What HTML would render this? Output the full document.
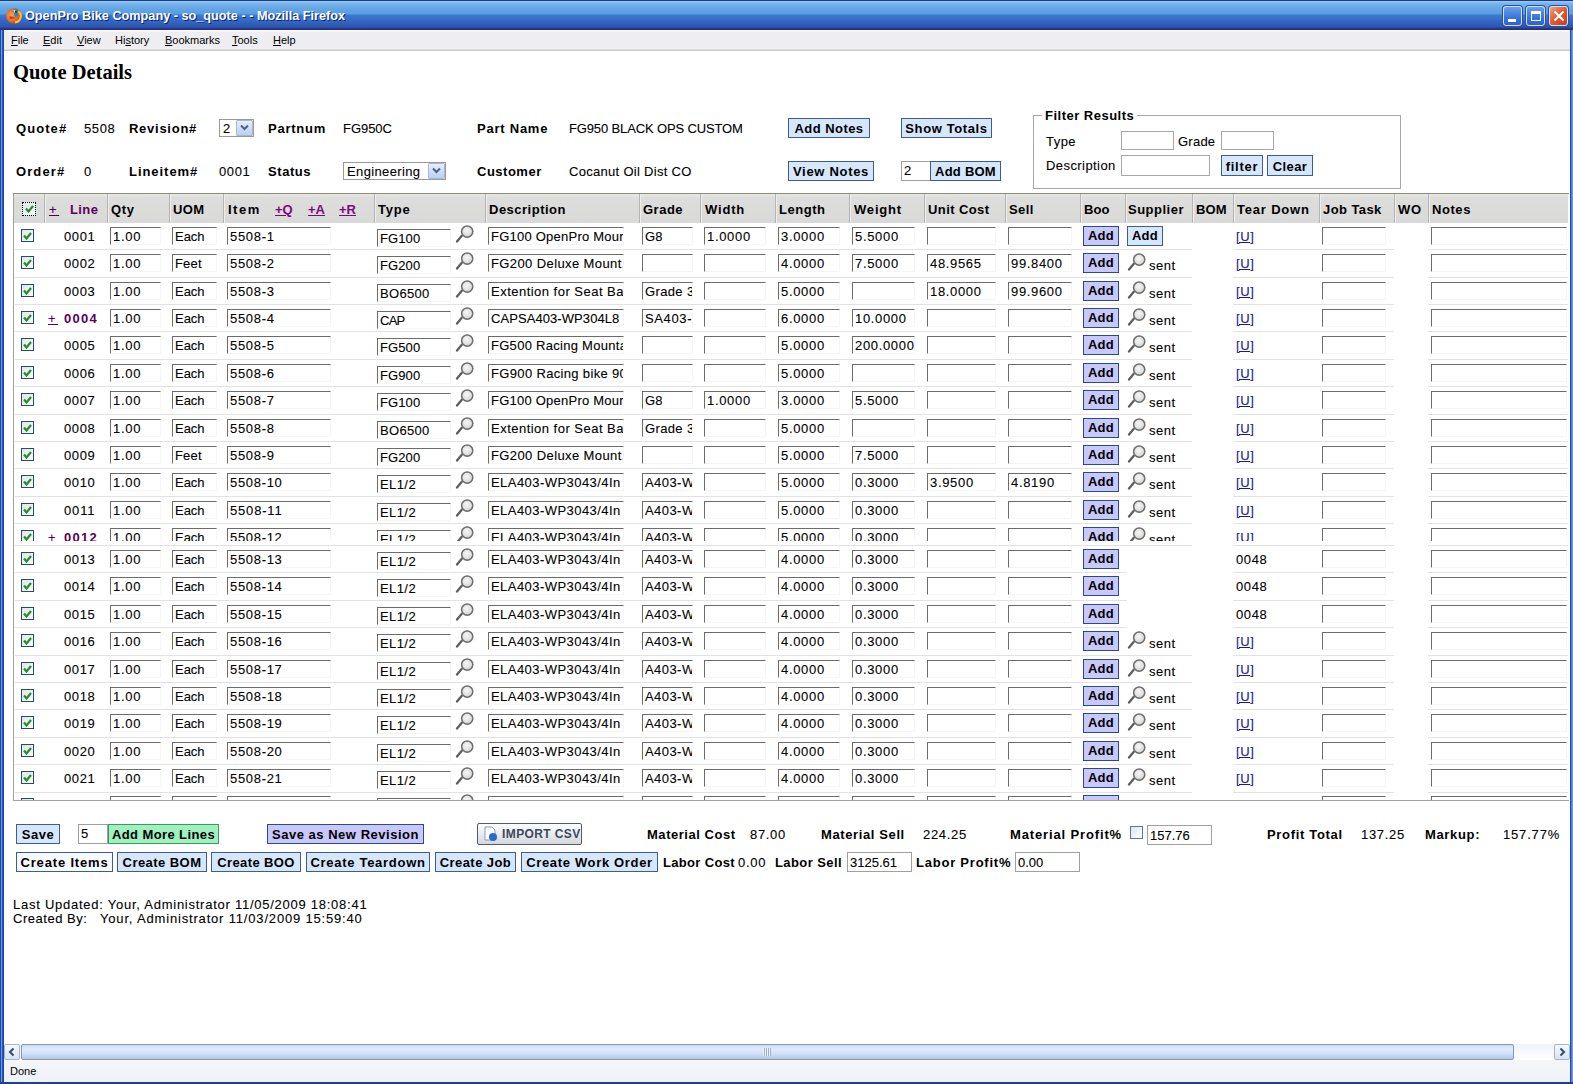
<!DOCTYPE html><html><head><meta charset="utf-8"><title>Quote Details</title><style>
*{box-sizing:border-box;margin:0;padding:0}
html,body{width:1573px;height:1084px;overflow:hidden;background:#fff}
body{position:relative;font-family:"Liberation Sans",sans-serif;font-size:13px;color:#000}
.a{position:absolute;white-space:nowrap}
.t{position:absolute;white-space:nowrap;font-size:13px;line-height:15px}
.b{font-weight:bold}
.inp{position:absolute;background:#fff;border-top:1px solid #6c6c6c;border-left:1px solid #6c6c6c;border-right:1px solid #f6f6f6;border-bottom:1px solid #f6f6f6;overflow:hidden;white-space:nowrap;font-size:13px;line-height:15px;padding-left:2px}
.btn{position:absolute;border:1px solid #3b5c94;background:#d6e6fb;font-weight:bold;font-size:13px;text-align:center;white-space:nowrap;padding-top:1px}
.cb{position:absolute;width:13px;height:13px;border:1px solid #2a4a6a;background:linear-gradient(135deg,#dfe9e5,#f6fbff)}
.sep{position:absolute;height:1px;background:#e2e2e2}
u{text-decoration:underline}
.t,.inp{-webkit-text-stroke:0.1px currentColor}
.b,.btn{-webkit-text-stroke:0}
</style></head><body>
<div class="a" style="left:0;top:0;width:1573px;height:30px;background:linear-gradient(#1e3f7a 0,#1e3f7a 1px,#9acbff 1px,#7db6ec 3px,#64a8e6 8px,#5b9be5 14px,#3a7cc8 15px,#3b6ed0 18px,#2f62bc 23px,#2b5fb0 25px,#2f50c0 27px,#283070 29px,#283070 30px)"></div>
<svg class="a" style="left:6px;top:8px" width="16" height="16" viewBox="0 0 16 16"><defs><radialGradient id="ff" cx="35%" cy="45%" r="65%"><stop offset="0" stop-color="#ffa050"/><stop offset="0.6" stop-color="#e86a20"/><stop offset="1" stop-color="#9a3a18"/></radialGradient></defs><circle cx="8" cy="8" r="7.8" fill="url(#ff)"/><path d="M12.2 3.2A6.2 6.2 0 0 1 9 14.4" stroke="#f4c040" stroke-width="2.2" fill="none"/><path d="M7 1.2L11.8 1.6L12 7.5L9.5 9.5L8 6Z" fill="#2f86a8"/><path d="M7.2 1.6L9.2 2.4L8.8 5.2Z" fill="#f6e8e0"/><circle cx="10" cy="3.8" r="0.9" fill="#101010"/><path d="M3 8.5Q6 7.5 9.5 9.8Q7 11.5 4 11Z" fill="#c84818"/></svg>
<div class="a b" style="left:25px;top:9px;font-size:12.7px;line-height:15px;color:#fff;text-shadow:1px 1px 0 #0a246a;letter-spacing:0px">OpenPro Bike Company - so_quote - - Mozilla Firefox</div>
<div class="a" style="left:1503px;top:6px;width:19px;height:20px;border:1px solid #d0e0ff;border-radius:3px;background:linear-gradient(#6aa0ec,#3a74d8 60%,#2f62c8);box-shadow:0 0 0 1px #2a50a0"></div>
<div class="a" style="left:1526px;top:6px;width:19px;height:20px;border:1px solid #d0e0ff;border-radius:3px;background:linear-gradient(#6aa0ec,#3a74d8 60%,#2f62c8);box-shadow:0 0 0 1px #2a50a0"></div>
<div class="a" style="left:1549px;top:6px;width:19px;height:20px;border:1px solid #d0e0ff;border-radius:3px;background:linear-gradient(135deg,#f0a080,#e05a2a 50%,#c8401a);box-shadow:0 0 0 1px #2a50a0"></div>
<div class="a" style="left:1508px;top:19px;width:8px;height:3px;background:#fff"></div>
<div class="a" style="left:1531px;top:11px;width:10px;height:10px;border:1px solid #fff;border-top:3px solid #fff"></div>
<svg class="a" style="left:1553px;top:10px" width="12" height="12" viewBox="0 0 12 12"><path d="M1.5 1.5L10.5 10.5M10.5 1.5L1.5 10.5" stroke="#fff" stroke-width="2.2"/></svg>
<div class="a" style="left:0;top:30px;width:4px;height:1054px;background:linear-gradient(90deg,#1b48b0 0,#1b48b0 1px,#6a9ae8 1px,#6a9ae8 2px,#2a5ec8 2px,#1e3f8a 4px)"></div>
<div class="a" style="left:1570px;top:30px;width:3px;height:1054px;background:linear-gradient(90deg,#1e3f8a 0,#2a5ec8 1px,#6a9ae8 2px)"></div>
<div class="a" style="left:0;top:1082px;width:1573px;height:2px;background:#1e3f8a"></div>
<div class="a" style="left:4px;top:30px;width:1566px;height:21px;background:linear-gradient(#fbfbfd 0,#fbfbfd 1px,#eeeef2 2px,#eeeef2 19px,#c9c9c9 20px,#c9c9c9 21px)"></div>
<div class="a" style="left:11px;top:34px;font-size:11px;line-height:13px;color:#000"><u>F</u>ile</div>
<div class="a" style="left:43px;top:34px;font-size:11px;line-height:13px;color:#000"><u>E</u>dit</div>
<div class="a" style="left:77px;top:34px;font-size:11px;line-height:13px;color:#000"><u>V</u>iew</div>
<div class="a" style="left:115px;top:34px;font-size:11px;line-height:13px;color:#000">Hi<u>s</u>tory</div>
<div class="a" style="left:165px;top:34px;font-size:11px;line-height:13px;color:#000"><u>B</u>ookmarks</div>
<div class="a" style="left:232px;top:34px;font-size:11px;line-height:13px;color:#000"><u>T</u>ools</div>
<div class="a" style="left:273px;top:34px;font-size:11px;line-height:13px;color:#000"><u>H</u>elp</div>
<div class="a" style="left:4px;top:1044px;width:1566px;height:16px;background:linear-gradient(#eef3fb,#fff)"></div>
<div class="a" style="left:4px;top:1044px;width:16px;height:16px;border:1px solid #a8b4c8;border-radius:2px;background:linear-gradient(#f4f8fe,#d8e4f4)"></div>
<svg class="a" style="left:7px;top:1047px" width="10" height="10" viewBox="0 0 10 10"><path d="M6.5 1.5L3 5L6.5 8.5" stroke="#3a4a5a" stroke-width="2" fill="none"/></svg>
<div class="a" style="left:21px;top:1044px;width:1493px;height:16px;border:1px solid #8898b0;border-radius:2px;background:linear-gradient(#c8dcf8,#e0ecfc 30%,#d0e0f8 60%,#b4c8e8)"></div>
<div class="a" style="left:763px;top:1048px;width:8px;height:8px;background:repeating-linear-gradient(90deg,#eef4fe 0,#eef4fe 1px,#9cb0d0 1px,#9cb0d0 2px)"></div>
<div class="a" style="left:1554px;top:1044px;width:16px;height:16px;border:1px solid #a8b4c8;border-radius:2px;background:linear-gradient(#f4f8fe,#d8e4f4)"></div>
<svg class="a" style="left:1557px;top:1047px" width="10" height="10" viewBox="0 0 10 10"><path d="M3.5 1.5L7 5L3.5 8.5" stroke="#3a4a5a" stroke-width="2" fill="none"/></svg>
<div class="a" style="left:4px;top:1060px;width:1566px;height:22px;background:linear-gradient(#f4f6fa,#eef2f6)"></div>
<div class="a" style="left:10px;top:1065px;font-size:11px;line-height:13px">Done</div>
<div class="a" style="left:13px;top:60px;font-family:'Liberation Serif',serif;font-weight:bold;font-size:20.5px;line-height:24px">Quote Details</div>
<div class="t b" style="left:16px;top:121px;letter-spacing:1.066px;">Quote#</div>
<div class="t" style="left:84px;top:121px;letter-spacing:0.631px;">5508</div>
<div class="t b" style="left:129px;top:121px;letter-spacing:0.734px;">Revision#</div>
<div class="t b" style="left:268px;top:121px;letter-spacing:0.757px;">Partnum</div>
<div class="t" style="left:343px;top:121px;letter-spacing:-0.039px;">FG950C</div>
<div class="t b" style="left:477px;top:121px;letter-spacing:0.765px;">Part Name</div>
<div class="t" style="left:569px;top:121px;letter-spacing:-0.14px;">FG950 BLACK OPS CUSTOM</div>
<div class="t b" style="left:16px;top:164px;letter-spacing:1.101px;">Order#</div>
<div class="t" style="left:84px;top:164px;letter-spacing:0.631px;">0</div>
<div class="t b" style="left:129px;top:164px;letter-spacing:0.952px;">Lineitem#</div>
<div class="t" style="left:219px;top:164px;letter-spacing:0.631px;">0001</div>
<div class="t b" style="left:268px;top:164px;letter-spacing:0.568px;">Status</div>
<div class="t b" style="left:477px;top:164px;letter-spacing:0.502px;">Customer</div>
<div class="t" style="left:569px;top:164px;letter-spacing:0.294px;">Cocanut Oil Dist CO</div>
<div class="a" style="left:219px;top:119px;width:35px;height:18px;border:1px solid #9a9a9a;background:#fff"></div>
<div class="t" style="left:223px;top:121px;letter-spacing:0.631px">2</div>
<div class="a" style="left:236px;top:120px;width:17px;height:16px;border:1px solid #a8b8d8;border-radius:1px;background:linear-gradient(#e4eefc,#bcd0f4)"></div>
<svg class="a" style="left:240px;top:124px" width="9" height="7" viewBox="0 0 9 7"><path d="M1 1.5L4.5 5L8 1.5" stroke="#4d6185" stroke-width="2" fill="none"/></svg>
<div class="a" style="left:343px;top:162px;width:103px;height:18px;border:1px solid #9a9a9a;background:#fff"></div>
<div class="t" style="left:347px;top:164px;letter-spacing:0.371px">Engineering</div>
<div class="a" style="left:428px;top:163px;width:17px;height:16px;border:1px solid #a8b8d8;border-radius:1px;background:linear-gradient(#e4eefc,#bcd0f4)"></div>
<svg class="a" style="left:432px;top:167px" width="9" height="7" viewBox="0 0 9 7"><path d="M1 1.5L4.5 5L8 1.5" stroke="#4d6185" stroke-width="2" fill="none"/></svg>
<div class="btn" style="left:788px;top:118px;width:82px;height:20px;line-height:18px;background:#d6e6fb;border-color:#3b5c94;letter-spacing:0.462px;">Add Notes</div>
<div class="btn" style="left:901px;top:118px;width:91px;height:20px;line-height:18px;background:#d6e6fb;border-color:#3b5c94;letter-spacing:0.609px;">Show Totals</div>
<div class="btn" style="left:788px;top:161px;width:86px;height:20px;line-height:18px;background:#d6e6fb;border-color:#3b5c94;letter-spacing:0.694px;">View Notes</div>
<div class="inp" style="left:901px;top:161px;width:30px;height:20px;line-height:18px;border:1px solid #a0a0a0">2</div>
<div class="btn" style="left:930px;top:161px;width:71px;height:20px;line-height:18px;background:#d6e6fb;border-color:#3b5c94;letter-spacing:0.243px;">Add BOM</div>
<div class="a" style="left:1033px;top:115px;width:368px;height:74px;border:1px solid #a8a8a8"></div>
<div class="t b" style="left:1042px;top:108px;background:#fff;padding:0 3px;letter-spacing:0.49px">Filter Results</div>
<div class="t" style="left:1046px;top:134px;letter-spacing:0.454px;">Type</div>
<div class="t" style="left:1046px;top:158px;letter-spacing:0.426px;">Description</div>
<div class="t" style="left:1178px;top:134px;letter-spacing:0.242px;">Grade</div>
<div class="inp" style="left:1121px;top:131px;width:53px;height:19px;border:1px solid #a8a8a8"></div>
<div class="inp" style="left:1221px;top:131px;width:53px;height:19px;border:1px solid #a8a8a8"></div>
<div class="inp" style="left:1121px;top:155px;width:89px;height:21px;border:1px solid #a8a8a8"></div>
<div class="btn" style="left:1221px;top:155px;width:42px;height:21px;line-height:19px;background:#d6e6fb;border-color:#3b5c94;letter-spacing:0.75px;">filter</div>
<div class="btn" style="left:1267px;top:155px;width:46px;height:21px;line-height:19px;background:#d6e6fb;border-color:#3b5c94;letter-spacing:0.444px;">Clear</div>
<div class="a" style="left:13px;top:193px;width:1556px;height:608px;border-top:1px solid #8c8c7c;border-left:1px solid #a0a0a0;border-bottom:1px solid #a0a0a0"></div>
<div class="a" style="left:14px;top:194px;width:1554px;height:29px;background:linear-gradient(#e8e8e2,#dddddb 15%,#d9d9d9)"></div>
<div class="a" style="left:44px;top:194px;width:1px;height:29px;background:#b4b4b4"></div>
<div class="a" style="left:45px;top:194px;width:1px;height:29px;background:#eeeeee"></div>
<div class="a" style="left:107px;top:194px;width:1px;height:29px;background:#b4b4b4"></div>
<div class="a" style="left:108px;top:194px;width:1px;height:29px;background:#eeeeee"></div>
<div class="a" style="left:169px;top:194px;width:1px;height:29px;background:#b4b4b4"></div>
<div class="a" style="left:170px;top:194px;width:1px;height:29px;background:#eeeeee"></div>
<div class="a" style="left:223px;top:194px;width:1px;height:29px;background:#b4b4b4"></div>
<div class="a" style="left:224px;top:194px;width:1px;height:29px;background:#eeeeee"></div>
<div class="a" style="left:374px;top:194px;width:1px;height:29px;background:#b4b4b4"></div>
<div class="a" style="left:375px;top:194px;width:1px;height:29px;background:#eeeeee"></div>
<div class="a" style="left:485px;top:194px;width:1px;height:29px;background:#b4b4b4"></div>
<div class="a" style="left:486px;top:194px;width:1px;height:29px;background:#eeeeee"></div>
<div class="a" style="left:639px;top:194px;width:1px;height:29px;background:#b4b4b4"></div>
<div class="a" style="left:640px;top:194px;width:1px;height:29px;background:#eeeeee"></div>
<div class="a" style="left:700px;top:194px;width:1px;height:29px;background:#b4b4b4"></div>
<div class="a" style="left:701px;top:194px;width:1px;height:29px;background:#eeeeee"></div>
<div class="a" style="left:775px;top:194px;width:1px;height:29px;background:#b4b4b4"></div>
<div class="a" style="left:776px;top:194px;width:1px;height:29px;background:#eeeeee"></div>
<div class="a" style="left:849px;top:194px;width:1px;height:29px;background:#b4b4b4"></div>
<div class="a" style="left:850px;top:194px;width:1px;height:29px;background:#eeeeee"></div>
<div class="a" style="left:924px;top:194px;width:1px;height:29px;background:#b4b4b4"></div>
<div class="a" style="left:925px;top:194px;width:1px;height:29px;background:#eeeeee"></div>
<div class="a" style="left:1005px;top:194px;width:1px;height:29px;background:#b4b4b4"></div>
<div class="a" style="left:1006px;top:194px;width:1px;height:29px;background:#eeeeee"></div>
<div class="a" style="left:1080px;top:194px;width:1px;height:29px;background:#b4b4b4"></div>
<div class="a" style="left:1081px;top:194px;width:1px;height:29px;background:#eeeeee"></div>
<div class="a" style="left:1125px;top:194px;width:1px;height:29px;background:#b4b4b4"></div>
<div class="a" style="left:1126px;top:194px;width:1px;height:29px;background:#eeeeee"></div>
<div class="a" style="left:1192px;top:194px;width:1px;height:29px;background:#b4b4b4"></div>
<div class="a" style="left:1193px;top:194px;width:1px;height:29px;background:#eeeeee"></div>
<div class="a" style="left:1233px;top:194px;width:1px;height:29px;background:#b4b4b4"></div>
<div class="a" style="left:1234px;top:194px;width:1px;height:29px;background:#eeeeee"></div>
<div class="a" style="left:1319px;top:194px;width:1px;height:29px;background:#b4b4b4"></div>
<div class="a" style="left:1320px;top:194px;width:1px;height:29px;background:#eeeeee"></div>
<div class="a" style="left:1394px;top:194px;width:1px;height:29px;background:#b4b4b4"></div>
<div class="a" style="left:1395px;top:194px;width:1px;height:29px;background:#eeeeee"></div>
<div class="a" style="left:1428px;top:194px;width:1px;height:29px;background:#b4b4b4"></div>
<div class="a" style="left:1429px;top:194px;width:1px;height:29px;background:#eeeeee"></div>
<div class="a" style="left:22px;top:202px;width:14px;height:14px;border:1px dotted #000;background:linear-gradient(135deg,#dfe9e5,#f6fbff)"></div>
<svg class="a" style="left:25px;top:205px" width="9" height="8" viewBox="0 0 9 8"><path d="M1 3.5L3.5 6.5L8 1" stroke="#2b8a2b" stroke-width="2.2" fill="none"/></svg>
<div class="t b" style="left:70px;top:202px;letter-spacing:0.384px;color:#5c005c;">Line</div>
<div class="t b" style="left:111px;top:202px;letter-spacing:0.604px;">Qty</div>
<div class="t b" style="left:173px;top:202px;letter-spacing:0.33px;">UOM</div>
<div class="t b" style="left:228px;top:202px;letter-spacing:1.489px;">Item</div>
<div class="t b" style="left:275px;top:202px;color:#7a0a7a"><u>+Q</u></div>
<div class="t b" style="left:308px;top:202px;color:#7a0a7a"><u>+A</u></div>
<div class="t b" style="left:339px;top:202px;color:#7a0a7a"><u>+R</u></div>
<div class="t b" style="left:378px;top:202px;letter-spacing:0.744px;">Type</div>
<div class="t b" style="left:489px;top:202px;letter-spacing:0.492px;">Description</div>
<div class="t b" style="left:643px;top:202px;letter-spacing:0.499px;">Grade</div>
<div class="t b" style="left:705px;top:202px;letter-spacing:0.813px;">Width</div>
<div class="t b" style="left:779px;top:202px;letter-spacing:0.54px;">Length</div>
<div class="t b" style="left:854px;top:202px;letter-spacing:0.82px;">Weight</div>
<div class="t b" style="left:928px;top:202px;letter-spacing:0.413px;">Unit Cost</div>
<div class="t b" style="left:1009px;top:202px;letter-spacing:0.393px;">Sell</div>
<div class="t b" style="left:1084px;top:202px;letter-spacing:0.121px;">Boo</div>
<div class="t b" style="left:1128px;top:202px;letter-spacing:0.497px;">Supplier</div>
<div class="t b" style="left:1196px;top:202px;letter-spacing:0.13px;">BOM</div>
<div class="t b" style="left:1237px;top:202px;letter-spacing:0.805px;">Tear Down</div>
<div class="t b" style="left:1323px;top:202px;letter-spacing:0.422px;">Job Task</div>
<div class="t b" style="left:1398px;top:202px;letter-spacing:0.677px;">WO</div>
<div class="t b" style="left:1432px;top:202px;letter-spacing:0.569px;">Notes</div>
<div class="t" style="left:49px;top:202px;letter-spacing:2.518px;color:#4a004a;"><u>+</u></div>
<svg width="0" height="0" style="position:absolute"><defs><radialGradient id="mg" cx="45%" cy="40%" r="60%"><stop offset="0" stop-color="#f6f6f6"/><stop offset="0.8" stop-color="#dcdcdc"/><stop offset="1" stop-color="#c0c0c0"/></radialGradient></defs></svg>
<div class="a" style="left:14px;top:223px;width:1555px;height:27px;overflow:hidden">
<div class="sep" style="left:1px;top:26px;width:1177px"></div>
<div class="sep" style="left:1219px;top:26px;width:161px"></div>
<div class="sep" style="left:1414px;top:26px;width:140px"></div>
<div class="cb" style="left:7px;top:6px"></div>
<svg class="a" style="left:9px;top:9px" width="9" height="8" viewBox="0 0 9 8"><path d="M1 3.5L3.5 6.5L8 1" stroke="#2b8a2b" stroke-width="2.2" fill="none"/></svg>
<div class="t" style="left:50px;top:6px;letter-spacing:0.631px;">0001</div>
<div class="inp" style="left:96px;top:4px;width:51px;height:18px;padding-top:1px;letter-spacing:0.695px">1.00</div>
<div class="inp" style="left:158px;top:4px;width:45px;height:18px;padding-top:1px;letter-spacing:-0.035px">Each</div>
<div class="inp" style="left:213px;top:4px;width:104px;height:18px;padding-top:1px;letter-spacing:0.692px">5508-1</div>
<div class="inp" style="left:363px;top:6px;width:74px;height:18px;padding-top:1px;letter-spacing:0.105px">FG100</div>
<svg class="a" style="left:441px;top:2px" width="19" height="19" viewBox="0 0 19 19"><path d="M6.8 10.8L2 16.6" stroke="#5e5e5e" stroke-width="2.3" stroke-linecap="round"/><circle cx="12.2" cy="6.6" r="5.6" fill="url(#mg)" stroke="#6e6e6e" stroke-width="1.5"/></svg>
<div class="inp" style="left:474px;top:4px;width:136px;height:18px;padding-top:1px;letter-spacing:0.235px">FG100 OpenPro Mour</div>
<div class="inp" style="left:628px;top:4px;width:51px;height:18px;padding-top:1px;letter-spacing:0.049px">G8</div>
<div class="inp" style="left:690px;top:4px;width:62px;height:18px;padding-top:1px;letter-spacing:0.674px">1.0000</div>
<div class="inp" style="left:764px;top:4px;width:62px;height:18px;padding-top:1px;letter-spacing:0.674px">3.0000</div>
<div class="inp" style="left:838px;top:4px;width:63px;height:18px;padding-top:1px;letter-spacing:0.674px">5.5000</div>
<div class="inp" style="left:913px;top:4px;width:69px;height:18px;padding-top:1px;letter-spacing:0px"></div>
<div class="inp" style="left:994px;top:4px;width:64px;height:18px;padding-top:1px;letter-spacing:0px"></div>
<div class="btn" style="left:1069px;top:3px;width:36px;height:20px;line-height:18px;background:#c8c8fa;border-color:#2a4a8a;letter-spacing:0.273px;padding-top:0">Add</div>
<div class="btn" style="left:1113px;top:3px;width:36px;height:20px;line-height:18px;background:#d6e6fb;border-color:#3b5c94;letter-spacing:0.273px;padding-top:0">Add</div>
<div class="t" style="left:1222px;top:6px;color:#1a1a8c"><u><span style="letter-spacing:0.6px">[U</span>]</u></div>
<div class="inp" style="left:1308px;top:4px;width:64px;height:18px;padding-top:1px;letter-spacing:0px"></div>
<div class="inp" style="left:1417px;top:4px;width:136px;height:18px;padding-top:1px;letter-spacing:0px"></div>
</div>
<div class="a" style="left:14px;top:250px;width:1555px;height:28px;overflow:hidden">
<div class="sep" style="left:1px;top:27px;width:1177px"></div>
<div class="sep" style="left:1219px;top:27px;width:161px"></div>
<div class="sep" style="left:1414px;top:27px;width:140px"></div>
<div class="cb" style="left:7px;top:6px"></div>
<svg class="a" style="left:9px;top:9px" width="9" height="8" viewBox="0 0 9 8"><path d="M1 3.5L3.5 6.5L8 1" stroke="#2b8a2b" stroke-width="2.2" fill="none"/></svg>
<div class="t" style="left:50px;top:6px;letter-spacing:0.631px;">0002</div>
<div class="inp" style="left:96px;top:4px;width:51px;height:18px;padding-top:1px;letter-spacing:0.695px">1.00</div>
<div class="inp" style="left:158px;top:4px;width:45px;height:18px;padding-top:1px;letter-spacing:0.174px">Feet</div>
<div class="inp" style="left:213px;top:4px;width:104px;height:18px;padding-top:1px;letter-spacing:0.692px">5508-2</div>
<div class="inp" style="left:363px;top:6px;width:74px;height:18px;padding-top:1px;letter-spacing:0.105px">FG200</div>
<svg class="a" style="left:441px;top:2px" width="19" height="19" viewBox="0 0 19 19"><path d="M6.8 10.8L2 16.6" stroke="#5e5e5e" stroke-width="2.3" stroke-linecap="round"/><circle cx="12.2" cy="6.6" r="5.6" fill="url(#mg)" stroke="#6e6e6e" stroke-width="1.5"/></svg>
<div class="inp" style="left:474px;top:4px;width:136px;height:18px;padding-top:1px;letter-spacing:0.395px">FG200 Deluxe Mount.</div>
<div class="inp" style="left:628px;top:4px;width:51px;height:18px;padding-top:1px;letter-spacing:0px"></div>
<div class="inp" style="left:690px;top:4px;width:62px;height:18px;padding-top:1px;letter-spacing:0px"></div>
<div class="inp" style="left:764px;top:4px;width:62px;height:18px;padding-top:1px;letter-spacing:0.674px">4.0000</div>
<div class="inp" style="left:838px;top:4px;width:63px;height:18px;padding-top:1px;letter-spacing:0.674px">7.5000</div>
<div class="inp" style="left:913px;top:4px;width:69px;height:18px;padding-top:1px;letter-spacing:0.668px">48.9565</div>
<div class="inp" style="left:994px;top:4px;width:64px;height:18px;padding-top:1px;letter-spacing:0.668px">99.8400</div>
<div class="btn" style="left:1069px;top:3px;width:36px;height:20px;line-height:18px;background:#c8c8fa;border-color:#2a4a8a;letter-spacing:0.273px;padding-top:0">Add</div>
<svg class="a" style="left:1113px;top:3px" width="19" height="19" viewBox="0 0 19 19"><path d="M6.8 10.8L2 16.6" stroke="#5e5e5e" stroke-width="2.3" stroke-linecap="round"/><circle cx="12.2" cy="6.6" r="5.6" fill="url(#mg)" stroke="#6e6e6e" stroke-width="1.5"/></svg>
<div class="t" style="left:1135px;top:8px;letter-spacing:0.482px;">sent</div>
<div class="t" style="left:1222px;top:6px;color:#1a1a8c"><u><span style="letter-spacing:0.6px">[U</span>]</u></div>
<div class="inp" style="left:1308px;top:4px;width:64px;height:18px;padding-top:1px;letter-spacing:0px"></div>
<div class="inp" style="left:1417px;top:4px;width:136px;height:18px;padding-top:1px;letter-spacing:0px"></div>
</div>
<div class="a" style="left:14px;top:278px;width:1555px;height:27px;overflow:hidden">
<div class="sep" style="left:1px;top:26px;width:1177px"></div>
<div class="sep" style="left:1219px;top:26px;width:161px"></div>
<div class="sep" style="left:1414px;top:26px;width:140px"></div>
<div class="cb" style="left:7px;top:6px"></div>
<svg class="a" style="left:9px;top:9px" width="9" height="8" viewBox="0 0 9 8"><path d="M1 3.5L3.5 6.5L8 1" stroke="#2b8a2b" stroke-width="2.2" fill="none"/></svg>
<div class="t" style="left:50px;top:6px;letter-spacing:0.631px;">0003</div>
<div class="inp" style="left:96px;top:4px;width:51px;height:18px;padding-top:1px;letter-spacing:0.695px">1.00</div>
<div class="inp" style="left:158px;top:4px;width:45px;height:18px;padding-top:1px;letter-spacing:-0.035px">Each</div>
<div class="inp" style="left:213px;top:4px;width:104px;height:18px;padding-top:1px;letter-spacing:0.692px">5508-3</div>
<div class="inp" style="left:363px;top:6px;width:74px;height:18px;padding-top:1px;letter-spacing:0.325px">BO6500</div>
<svg class="a" style="left:441px;top:2px" width="19" height="19" viewBox="0 0 19 19"><path d="M6.8 10.8L2 16.6" stroke="#5e5e5e" stroke-width="2.3" stroke-linecap="round"/><circle cx="12.2" cy="6.6" r="5.6" fill="url(#mg)" stroke="#6e6e6e" stroke-width="1.5"/></svg>
<div class="inp" style="left:474px;top:4px;width:136px;height:18px;padding-top:1px;letter-spacing:0.481px">Extention for Seat Ba</div>
<div class="inp" style="left:628px;top:4px;width:51px;height:18px;padding-top:1px;letter-spacing:0.368px">Grade 3</div>
<div class="inp" style="left:690px;top:4px;width:62px;height:18px;padding-top:1px;letter-spacing:0px"></div>
<div class="inp" style="left:764px;top:4px;width:62px;height:18px;padding-top:1px;letter-spacing:0.674px">5.0000</div>
<div class="inp" style="left:838px;top:4px;width:63px;height:18px;padding-top:1px;letter-spacing:0px"></div>
<div class="inp" style="left:913px;top:4px;width:69px;height:18px;padding-top:1px;letter-spacing:0.668px">18.0000</div>
<div class="inp" style="left:994px;top:4px;width:64px;height:18px;padding-top:1px;letter-spacing:0.668px">99.9600</div>
<div class="btn" style="left:1069px;top:3px;width:36px;height:20px;line-height:18px;background:#c8c8fa;border-color:#2a4a8a;letter-spacing:0.273px;padding-top:0">Add</div>
<svg class="a" style="left:1113px;top:3px" width="19" height="19" viewBox="0 0 19 19"><path d="M6.8 10.8L2 16.6" stroke="#5e5e5e" stroke-width="2.3" stroke-linecap="round"/><circle cx="12.2" cy="6.6" r="5.6" fill="url(#mg)" stroke="#6e6e6e" stroke-width="1.5"/></svg>
<div class="t" style="left:1135px;top:8px;letter-spacing:0.482px;">sent</div>
<div class="t" style="left:1222px;top:6px;color:#1a1a8c"><u><span style="letter-spacing:0.6px">[U</span>]</u></div>
<div class="inp" style="left:1308px;top:4px;width:64px;height:18px;padding-top:1px;letter-spacing:0px"></div>
<div class="inp" style="left:1417px;top:4px;width:136px;height:18px;padding-top:1px;letter-spacing:0px"></div>
</div>
<div class="a" style="left:14px;top:305px;width:1555px;height:27px;overflow:hidden">
<div class="sep" style="left:1px;top:26px;width:1177px"></div>
<div class="sep" style="left:1219px;top:26px;width:161px"></div>
<div class="sep" style="left:1414px;top:26px;width:140px"></div>
<div class="cb" style="left:7px;top:6px"></div>
<svg class="a" style="left:9px;top:9px" width="9" height="8" viewBox="0 0 9 8"><path d="M1 3.5L3.5 6.5L8 1" stroke="#2b8a2b" stroke-width="2.2" fill="none"/></svg>
<div class="t" style="left:34px;top:6px;letter-spacing:2.518px;color:#5a005a;"><u>+</u></div>
<div class="t b" style="left:50px;top:6px;letter-spacing:1.302px;color:#5a005a;">0004</div>
<div class="inp" style="left:96px;top:4px;width:51px;height:18px;padding-top:1px;letter-spacing:0.695px">1.00</div>
<div class="inp" style="left:158px;top:4px;width:45px;height:18px;padding-top:1px;letter-spacing:-0.035px">Each</div>
<div class="inp" style="left:213px;top:4px;width:104px;height:18px;padding-top:1px;letter-spacing:0.692px">5508-4</div>
<div class="inp" style="left:363px;top:6px;width:74px;height:18px;padding-top:1px;letter-spacing:-0.731px">CAP</div>
<svg class="a" style="left:441px;top:2px" width="19" height="19" viewBox="0 0 19 19"><path d="M6.8 10.8L2 16.6" stroke="#5e5e5e" stroke-width="2.3" stroke-linecap="round"/><circle cx="12.2" cy="6.6" r="5.6" fill="url(#mg)" stroke="#6e6e6e" stroke-width="1.5"/></svg>
<div class="inp" style="left:474px;top:4px;width:136px;height:18px;padding-top:1px;letter-spacing:0.073px">CAPSA403-WP304L8</div>
<div class="inp" style="left:628px;top:4px;width:51px;height:18px;padding-top:1px;letter-spacing:0.635px">SA403-\</div>
<div class="inp" style="left:690px;top:4px;width:62px;height:18px;padding-top:1px;letter-spacing:0px"></div>
<div class="inp" style="left:764px;top:4px;width:62px;height:18px;padding-top:1px;letter-spacing:0.674px">6.0000</div>
<div class="inp" style="left:838px;top:4px;width:63px;height:18px;padding-top:1px;letter-spacing:0.668px">10.0000</div>
<div class="inp" style="left:913px;top:4px;width:69px;height:18px;padding-top:1px;letter-spacing:0px"></div>
<div class="inp" style="left:994px;top:4px;width:64px;height:18px;padding-top:1px;letter-spacing:0px"></div>
<div class="btn" style="left:1069px;top:3px;width:36px;height:20px;line-height:18px;background:#c8c8fa;border-color:#2a4a8a;letter-spacing:0.273px;padding-top:0">Add</div>
<svg class="a" style="left:1113px;top:3px" width="19" height="19" viewBox="0 0 19 19"><path d="M6.8 10.8L2 16.6" stroke="#5e5e5e" stroke-width="2.3" stroke-linecap="round"/><circle cx="12.2" cy="6.6" r="5.6" fill="url(#mg)" stroke="#6e6e6e" stroke-width="1.5"/></svg>
<div class="t" style="left:1135px;top:8px;letter-spacing:0.482px;">sent</div>
<div class="t" style="left:1222px;top:6px;color:#1a1a8c"><u><span style="letter-spacing:0.6px">[U</span>]</u></div>
<div class="inp" style="left:1308px;top:4px;width:64px;height:18px;padding-top:1px;letter-spacing:0px"></div>
<div class="inp" style="left:1417px;top:4px;width:136px;height:18px;padding-top:1px;letter-spacing:0px"></div>
</div>
<div class="a" style="left:14px;top:332px;width:1555px;height:28px;overflow:hidden">
<div class="sep" style="left:1px;top:27px;width:1177px"></div>
<div class="sep" style="left:1219px;top:27px;width:161px"></div>
<div class="sep" style="left:1414px;top:27px;width:140px"></div>
<div class="cb" style="left:7px;top:6px"></div>
<svg class="a" style="left:9px;top:9px" width="9" height="8" viewBox="0 0 9 8"><path d="M1 3.5L3.5 6.5L8 1" stroke="#2b8a2b" stroke-width="2.2" fill="none"/></svg>
<div class="t" style="left:50px;top:6px;letter-spacing:0.631px;">0005</div>
<div class="inp" style="left:96px;top:4px;width:51px;height:18px;padding-top:1px;letter-spacing:0.695px">1.00</div>
<div class="inp" style="left:158px;top:4px;width:45px;height:18px;padding-top:1px;letter-spacing:-0.035px">Each</div>
<div class="inp" style="left:213px;top:4px;width:104px;height:18px;padding-top:1px;letter-spacing:0.692px">5508-5</div>
<div class="inp" style="left:363px;top:6px;width:74px;height:18px;padding-top:1px;letter-spacing:0.105px">FG500</div>
<svg class="a" style="left:441px;top:2px" width="19" height="19" viewBox="0 0 19 19"><path d="M6.8 10.8L2 16.6" stroke="#5e5e5e" stroke-width="2.3" stroke-linecap="round"/><circle cx="12.2" cy="6.6" r="5.6" fill="url(#mg)" stroke="#6e6e6e" stroke-width="1.5"/></svg>
<div class="inp" style="left:474px;top:4px;width:136px;height:18px;padding-top:1px;letter-spacing:0.284px">FG500 Racing Mounta</div>
<div class="inp" style="left:628px;top:4px;width:51px;height:18px;padding-top:1px;letter-spacing:0px"></div>
<div class="inp" style="left:690px;top:4px;width:62px;height:18px;padding-top:1px;letter-spacing:0px"></div>
<div class="inp" style="left:764px;top:4px;width:62px;height:18px;padding-top:1px;letter-spacing:0.674px">5.0000</div>
<div class="inp" style="left:838px;top:4px;width:63px;height:18px;padding-top:1px;letter-spacing:0.663px">200.0000</div>
<div class="inp" style="left:913px;top:4px;width:69px;height:18px;padding-top:1px;letter-spacing:0px"></div>
<div class="inp" style="left:994px;top:4px;width:64px;height:18px;padding-top:1px;letter-spacing:0px"></div>
<div class="btn" style="left:1069px;top:3px;width:36px;height:20px;line-height:18px;background:#c8c8fa;border-color:#2a4a8a;letter-spacing:0.273px;padding-top:0">Add</div>
<svg class="a" style="left:1113px;top:3px" width="19" height="19" viewBox="0 0 19 19"><path d="M6.8 10.8L2 16.6" stroke="#5e5e5e" stroke-width="2.3" stroke-linecap="round"/><circle cx="12.2" cy="6.6" r="5.6" fill="url(#mg)" stroke="#6e6e6e" stroke-width="1.5"/></svg>
<div class="t" style="left:1135px;top:8px;letter-spacing:0.482px;">sent</div>
<div class="t" style="left:1222px;top:6px;color:#1a1a8c"><u><span style="letter-spacing:0.6px">[U</span>]</u></div>
<div class="inp" style="left:1308px;top:4px;width:64px;height:18px;padding-top:1px;letter-spacing:0px"></div>
<div class="inp" style="left:1417px;top:4px;width:136px;height:18px;padding-top:1px;letter-spacing:0px"></div>
</div>
<div class="a" style="left:14px;top:360px;width:1555px;height:27px;overflow:hidden">
<div class="sep" style="left:1px;top:26px;width:1177px"></div>
<div class="sep" style="left:1219px;top:26px;width:161px"></div>
<div class="sep" style="left:1414px;top:26px;width:140px"></div>
<div class="cb" style="left:7px;top:6px"></div>
<svg class="a" style="left:9px;top:9px" width="9" height="8" viewBox="0 0 9 8"><path d="M1 3.5L3.5 6.5L8 1" stroke="#2b8a2b" stroke-width="2.2" fill="none"/></svg>
<div class="t" style="left:50px;top:6px;letter-spacing:0.631px;">0006</div>
<div class="inp" style="left:96px;top:4px;width:51px;height:18px;padding-top:1px;letter-spacing:0.695px">1.00</div>
<div class="inp" style="left:158px;top:4px;width:45px;height:18px;padding-top:1px;letter-spacing:-0.035px">Each</div>
<div class="inp" style="left:213px;top:4px;width:104px;height:18px;padding-top:1px;letter-spacing:0.692px">5508-6</div>
<div class="inp" style="left:363px;top:6px;width:74px;height:18px;padding-top:1px;letter-spacing:0.105px">FG900</div>
<svg class="a" style="left:441px;top:2px" width="19" height="19" viewBox="0 0 19 19"><path d="M6.8 10.8L2 16.6" stroke="#5e5e5e" stroke-width="2.3" stroke-linecap="round"/><circle cx="12.2" cy="6.6" r="5.6" fill="url(#mg)" stroke="#6e6e6e" stroke-width="1.5"/></svg>
<div class="inp" style="left:474px;top:4px;width:136px;height:18px;padding-top:1px;letter-spacing:0.341px">FG900 Racing bike 90</div>
<div class="inp" style="left:628px;top:4px;width:51px;height:18px;padding-top:1px;letter-spacing:0px"></div>
<div class="inp" style="left:690px;top:4px;width:62px;height:18px;padding-top:1px;letter-spacing:0px"></div>
<div class="inp" style="left:764px;top:4px;width:62px;height:18px;padding-top:1px;letter-spacing:0.674px">5.0000</div>
<div class="inp" style="left:838px;top:4px;width:63px;height:18px;padding-top:1px;letter-spacing:0px"></div>
<div class="inp" style="left:913px;top:4px;width:69px;height:18px;padding-top:1px;letter-spacing:0px"></div>
<div class="inp" style="left:994px;top:4px;width:64px;height:18px;padding-top:1px;letter-spacing:0px"></div>
<div class="btn" style="left:1069px;top:3px;width:36px;height:20px;line-height:18px;background:#c8c8fa;border-color:#2a4a8a;letter-spacing:0.273px;padding-top:0">Add</div>
<svg class="a" style="left:1113px;top:3px" width="19" height="19" viewBox="0 0 19 19"><path d="M6.8 10.8L2 16.6" stroke="#5e5e5e" stroke-width="2.3" stroke-linecap="round"/><circle cx="12.2" cy="6.6" r="5.6" fill="url(#mg)" stroke="#6e6e6e" stroke-width="1.5"/></svg>
<div class="t" style="left:1135px;top:8px;letter-spacing:0.482px;">sent</div>
<div class="t" style="left:1222px;top:6px;color:#1a1a8c"><u><span style="letter-spacing:0.6px">[U</span>]</u></div>
<div class="inp" style="left:1308px;top:4px;width:64px;height:18px;padding-top:1px;letter-spacing:0px"></div>
<div class="inp" style="left:1417px;top:4px;width:136px;height:18px;padding-top:1px;letter-spacing:0px"></div>
</div>
<div class="a" style="left:14px;top:387px;width:1555px;height:28px;overflow:hidden">
<div class="sep" style="left:1px;top:27px;width:1177px"></div>
<div class="sep" style="left:1219px;top:27px;width:161px"></div>
<div class="sep" style="left:1414px;top:27px;width:140px"></div>
<div class="cb" style="left:7px;top:6px"></div>
<svg class="a" style="left:9px;top:9px" width="9" height="8" viewBox="0 0 9 8"><path d="M1 3.5L3.5 6.5L8 1" stroke="#2b8a2b" stroke-width="2.2" fill="none"/></svg>
<div class="t" style="left:50px;top:6px;letter-spacing:0.631px;">0007</div>
<div class="inp" style="left:96px;top:4px;width:51px;height:18px;padding-top:1px;letter-spacing:0.695px">1.00</div>
<div class="inp" style="left:158px;top:4px;width:45px;height:18px;padding-top:1px;letter-spacing:-0.035px">Each</div>
<div class="inp" style="left:213px;top:4px;width:104px;height:18px;padding-top:1px;letter-spacing:0.692px">5508-7</div>
<div class="inp" style="left:363px;top:6px;width:74px;height:18px;padding-top:1px;letter-spacing:0.105px">FG100</div>
<svg class="a" style="left:441px;top:2px" width="19" height="19" viewBox="0 0 19 19"><path d="M6.8 10.8L2 16.6" stroke="#5e5e5e" stroke-width="2.3" stroke-linecap="round"/><circle cx="12.2" cy="6.6" r="5.6" fill="url(#mg)" stroke="#6e6e6e" stroke-width="1.5"/></svg>
<div class="inp" style="left:474px;top:4px;width:136px;height:18px;padding-top:1px;letter-spacing:0.235px">FG100 OpenPro Mour</div>
<div class="inp" style="left:628px;top:4px;width:51px;height:18px;padding-top:1px;letter-spacing:0.049px">G8</div>
<div class="inp" style="left:690px;top:4px;width:62px;height:18px;padding-top:1px;letter-spacing:0.674px">1.0000</div>
<div class="inp" style="left:764px;top:4px;width:62px;height:18px;padding-top:1px;letter-spacing:0.674px">3.0000</div>
<div class="inp" style="left:838px;top:4px;width:63px;height:18px;padding-top:1px;letter-spacing:0.674px">5.5000</div>
<div class="inp" style="left:913px;top:4px;width:69px;height:18px;padding-top:1px;letter-spacing:0px"></div>
<div class="inp" style="left:994px;top:4px;width:64px;height:18px;padding-top:1px;letter-spacing:0px"></div>
<div class="btn" style="left:1069px;top:3px;width:36px;height:20px;line-height:18px;background:#c8c8fa;border-color:#2a4a8a;letter-spacing:0.273px;padding-top:0">Add</div>
<svg class="a" style="left:1113px;top:3px" width="19" height="19" viewBox="0 0 19 19"><path d="M6.8 10.8L2 16.6" stroke="#5e5e5e" stroke-width="2.3" stroke-linecap="round"/><circle cx="12.2" cy="6.6" r="5.6" fill="url(#mg)" stroke="#6e6e6e" stroke-width="1.5"/></svg>
<div class="t" style="left:1135px;top:8px;letter-spacing:0.482px;">sent</div>
<div class="t" style="left:1222px;top:6px;color:#1a1a8c"><u><span style="letter-spacing:0.6px">[U</span>]</u></div>
<div class="inp" style="left:1308px;top:4px;width:64px;height:18px;padding-top:1px;letter-spacing:0px"></div>
<div class="inp" style="left:1417px;top:4px;width:136px;height:18px;padding-top:1px;letter-spacing:0px"></div>
</div>
<div class="a" style="left:14px;top:415px;width:1555px;height:27px;overflow:hidden">
<div class="sep" style="left:1px;top:26px;width:1177px"></div>
<div class="sep" style="left:1219px;top:26px;width:161px"></div>
<div class="sep" style="left:1414px;top:26px;width:140px"></div>
<div class="cb" style="left:7px;top:6px"></div>
<svg class="a" style="left:9px;top:9px" width="9" height="8" viewBox="0 0 9 8"><path d="M1 3.5L3.5 6.5L8 1" stroke="#2b8a2b" stroke-width="2.2" fill="none"/></svg>
<div class="t" style="left:50px;top:6px;letter-spacing:0.631px;">0008</div>
<div class="inp" style="left:96px;top:4px;width:51px;height:18px;padding-top:1px;letter-spacing:0.695px">1.00</div>
<div class="inp" style="left:158px;top:4px;width:45px;height:18px;padding-top:1px;letter-spacing:-0.035px">Each</div>
<div class="inp" style="left:213px;top:4px;width:104px;height:18px;padding-top:1px;letter-spacing:0.692px">5508-8</div>
<div class="inp" style="left:363px;top:6px;width:74px;height:18px;padding-top:1px;letter-spacing:0.325px">BO6500</div>
<svg class="a" style="left:441px;top:2px" width="19" height="19" viewBox="0 0 19 19"><path d="M6.8 10.8L2 16.6" stroke="#5e5e5e" stroke-width="2.3" stroke-linecap="round"/><circle cx="12.2" cy="6.6" r="5.6" fill="url(#mg)" stroke="#6e6e6e" stroke-width="1.5"/></svg>
<div class="inp" style="left:474px;top:4px;width:136px;height:18px;padding-top:1px;letter-spacing:0.481px">Extention for Seat Ba</div>
<div class="inp" style="left:628px;top:4px;width:51px;height:18px;padding-top:1px;letter-spacing:0.368px">Grade 3</div>
<div class="inp" style="left:690px;top:4px;width:62px;height:18px;padding-top:1px;letter-spacing:0px"></div>
<div class="inp" style="left:764px;top:4px;width:62px;height:18px;padding-top:1px;letter-spacing:0.674px">5.0000</div>
<div class="inp" style="left:838px;top:4px;width:63px;height:18px;padding-top:1px;letter-spacing:0px"></div>
<div class="inp" style="left:913px;top:4px;width:69px;height:18px;padding-top:1px;letter-spacing:0px"></div>
<div class="inp" style="left:994px;top:4px;width:64px;height:18px;padding-top:1px;letter-spacing:0px"></div>
<div class="btn" style="left:1069px;top:3px;width:36px;height:20px;line-height:18px;background:#c8c8fa;border-color:#2a4a8a;letter-spacing:0.273px;padding-top:0">Add</div>
<svg class="a" style="left:1113px;top:3px" width="19" height="19" viewBox="0 0 19 19"><path d="M6.8 10.8L2 16.6" stroke="#5e5e5e" stroke-width="2.3" stroke-linecap="round"/><circle cx="12.2" cy="6.6" r="5.6" fill="url(#mg)" stroke="#6e6e6e" stroke-width="1.5"/></svg>
<div class="t" style="left:1135px;top:8px;letter-spacing:0.482px;">sent</div>
<div class="t" style="left:1222px;top:6px;color:#1a1a8c"><u><span style="letter-spacing:0.6px">[U</span>]</u></div>
<div class="inp" style="left:1308px;top:4px;width:64px;height:18px;padding-top:1px;letter-spacing:0px"></div>
<div class="inp" style="left:1417px;top:4px;width:136px;height:18px;padding-top:1px;letter-spacing:0px"></div>
</div>
<div class="a" style="left:14px;top:442px;width:1555px;height:27px;overflow:hidden">
<div class="sep" style="left:1px;top:26px;width:1177px"></div>
<div class="sep" style="left:1219px;top:26px;width:161px"></div>
<div class="sep" style="left:1414px;top:26px;width:140px"></div>
<div class="cb" style="left:7px;top:6px"></div>
<svg class="a" style="left:9px;top:9px" width="9" height="8" viewBox="0 0 9 8"><path d="M1 3.5L3.5 6.5L8 1" stroke="#2b8a2b" stroke-width="2.2" fill="none"/></svg>
<div class="t" style="left:50px;top:6px;letter-spacing:0.631px;">0009</div>
<div class="inp" style="left:96px;top:4px;width:51px;height:18px;padding-top:1px;letter-spacing:0.695px">1.00</div>
<div class="inp" style="left:158px;top:4px;width:45px;height:18px;padding-top:1px;letter-spacing:0.174px">Feet</div>
<div class="inp" style="left:213px;top:4px;width:104px;height:18px;padding-top:1px;letter-spacing:0.692px">5508-9</div>
<div class="inp" style="left:363px;top:6px;width:74px;height:18px;padding-top:1px;letter-spacing:0.105px">FG200</div>
<svg class="a" style="left:441px;top:2px" width="19" height="19" viewBox="0 0 19 19"><path d="M6.8 10.8L2 16.6" stroke="#5e5e5e" stroke-width="2.3" stroke-linecap="round"/><circle cx="12.2" cy="6.6" r="5.6" fill="url(#mg)" stroke="#6e6e6e" stroke-width="1.5"/></svg>
<div class="inp" style="left:474px;top:4px;width:136px;height:18px;padding-top:1px;letter-spacing:0.395px">FG200 Deluxe Mount.</div>
<div class="inp" style="left:628px;top:4px;width:51px;height:18px;padding-top:1px;letter-spacing:0px"></div>
<div class="inp" style="left:690px;top:4px;width:62px;height:18px;padding-top:1px;letter-spacing:0px"></div>
<div class="inp" style="left:764px;top:4px;width:62px;height:18px;padding-top:1px;letter-spacing:0.674px">5.0000</div>
<div class="inp" style="left:838px;top:4px;width:63px;height:18px;padding-top:1px;letter-spacing:0.674px">7.5000</div>
<div class="inp" style="left:913px;top:4px;width:69px;height:18px;padding-top:1px;letter-spacing:0px"></div>
<div class="inp" style="left:994px;top:4px;width:64px;height:18px;padding-top:1px;letter-spacing:0px"></div>
<div class="btn" style="left:1069px;top:3px;width:36px;height:20px;line-height:18px;background:#c8c8fa;border-color:#2a4a8a;letter-spacing:0.273px;padding-top:0">Add</div>
<svg class="a" style="left:1113px;top:3px" width="19" height="19" viewBox="0 0 19 19"><path d="M6.8 10.8L2 16.6" stroke="#5e5e5e" stroke-width="2.3" stroke-linecap="round"/><circle cx="12.2" cy="6.6" r="5.6" fill="url(#mg)" stroke="#6e6e6e" stroke-width="1.5"/></svg>
<div class="t" style="left:1135px;top:8px;letter-spacing:0.482px;">sent</div>
<div class="t" style="left:1222px;top:6px;color:#1a1a8c"><u><span style="letter-spacing:0.6px">[U</span>]</u></div>
<div class="inp" style="left:1308px;top:4px;width:64px;height:18px;padding-top:1px;letter-spacing:0px"></div>
<div class="inp" style="left:1417px;top:4px;width:136px;height:18px;padding-top:1px;letter-spacing:0px"></div>
</div>
<div class="a" style="left:14px;top:469px;width:1555px;height:28px;overflow:hidden">
<div class="sep" style="left:1px;top:27px;width:1177px"></div>
<div class="sep" style="left:1219px;top:27px;width:161px"></div>
<div class="sep" style="left:1414px;top:27px;width:140px"></div>
<div class="cb" style="left:7px;top:6px"></div>
<svg class="a" style="left:9px;top:9px" width="9" height="8" viewBox="0 0 9 8"><path d="M1 3.5L3.5 6.5L8 1" stroke="#2b8a2b" stroke-width="2.2" fill="none"/></svg>
<div class="t" style="left:50px;top:6px;letter-spacing:0.631px;">0010</div>
<div class="inp" style="left:96px;top:4px;width:51px;height:18px;padding-top:1px;letter-spacing:0.695px">1.00</div>
<div class="inp" style="left:158px;top:4px;width:45px;height:18px;padding-top:1px;letter-spacing:-0.035px">Each</div>
<div class="inp" style="left:213px;top:4px;width:104px;height:18px;padding-top:1px;letter-spacing:0.684px">5508-10</div>
<div class="inp" style="left:363px;top:6px;width:74px;height:18px;padding-top:1px;letter-spacing:0.412px">EL1/2</div>
<svg class="a" style="left:441px;top:2px" width="19" height="19" viewBox="0 0 19 19"><path d="M6.8 10.8L2 16.6" stroke="#5e5e5e" stroke-width="2.3" stroke-linecap="round"/><circle cx="12.2" cy="6.6" r="5.6" fill="url(#mg)" stroke="#6e6e6e" stroke-width="1.5"/></svg>
<div class="inp" style="left:474px;top:4px;width:136px;height:18px;padding-top:1px;letter-spacing:0.444px">ELA403-WP3043/4In</div>
<div class="inp" style="left:628px;top:4px;width:51px;height:18px;padding-top:1px;letter-spacing:0.438px">A403-W</div>
<div class="inp" style="left:690px;top:4px;width:62px;height:18px;padding-top:1px;letter-spacing:0px"></div>
<div class="inp" style="left:764px;top:4px;width:62px;height:18px;padding-top:1px;letter-spacing:0.674px">5.0000</div>
<div class="inp" style="left:838px;top:4px;width:63px;height:18px;padding-top:1px;letter-spacing:0.674px">0.3000</div>
<div class="inp" style="left:913px;top:4px;width:69px;height:18px;padding-top:1px;letter-spacing:0.674px">3.9500</div>
<div class="inp" style="left:994px;top:4px;width:64px;height:18px;padding-top:1px;letter-spacing:0.674px">4.8190</div>
<div class="btn" style="left:1069px;top:3px;width:36px;height:20px;line-height:18px;background:#c8c8fa;border-color:#2a4a8a;letter-spacing:0.273px;padding-top:0">Add</div>
<svg class="a" style="left:1113px;top:3px" width="19" height="19" viewBox="0 0 19 19"><path d="M6.8 10.8L2 16.6" stroke="#5e5e5e" stroke-width="2.3" stroke-linecap="round"/><circle cx="12.2" cy="6.6" r="5.6" fill="url(#mg)" stroke="#6e6e6e" stroke-width="1.5"/></svg>
<div class="t" style="left:1135px;top:8px;letter-spacing:0.482px;">sent</div>
<div class="t" style="left:1222px;top:6px;color:#1a1a8c"><u><span style="letter-spacing:0.6px">[U</span>]</u></div>
<div class="inp" style="left:1308px;top:4px;width:64px;height:18px;padding-top:1px;letter-spacing:0px"></div>
<div class="inp" style="left:1417px;top:4px;width:136px;height:18px;padding-top:1px;letter-spacing:0px"></div>
</div>
<div class="a" style="left:14px;top:497px;width:1555px;height:27px;overflow:hidden">
<div class="sep" style="left:1px;top:26px;width:1177px"></div>
<div class="sep" style="left:1219px;top:26px;width:161px"></div>
<div class="sep" style="left:1414px;top:26px;width:140px"></div>
<div class="cb" style="left:7px;top:6px"></div>
<svg class="a" style="left:9px;top:9px" width="9" height="8" viewBox="0 0 9 8"><path d="M1 3.5L3.5 6.5L8 1" stroke="#2b8a2b" stroke-width="2.2" fill="none"/></svg>
<div class="t" style="left:50px;top:6px;letter-spacing:0.872px;">0011</div>
<div class="inp" style="left:96px;top:4px;width:51px;height:18px;padding-top:1px;letter-spacing:0.695px">1.00</div>
<div class="inp" style="left:158px;top:4px;width:45px;height:18px;padding-top:1px;letter-spacing:-0.035px">Each</div>
<div class="inp" style="left:213px;top:4px;width:104px;height:18px;padding-top:1px;letter-spacing:0.821px">5508-11</div>
<div class="inp" style="left:363px;top:6px;width:74px;height:18px;padding-top:1px;letter-spacing:0.412px">EL1/2</div>
<svg class="a" style="left:441px;top:2px" width="19" height="19" viewBox="0 0 19 19"><path d="M6.8 10.8L2 16.6" stroke="#5e5e5e" stroke-width="2.3" stroke-linecap="round"/><circle cx="12.2" cy="6.6" r="5.6" fill="url(#mg)" stroke="#6e6e6e" stroke-width="1.5"/></svg>
<div class="inp" style="left:474px;top:4px;width:136px;height:18px;padding-top:1px;letter-spacing:0.444px">ELA403-WP3043/4In</div>
<div class="inp" style="left:628px;top:4px;width:51px;height:18px;padding-top:1px;letter-spacing:0.438px">A403-W</div>
<div class="inp" style="left:690px;top:4px;width:62px;height:18px;padding-top:1px;letter-spacing:0px"></div>
<div class="inp" style="left:764px;top:4px;width:62px;height:18px;padding-top:1px;letter-spacing:0.674px">5.0000</div>
<div class="inp" style="left:838px;top:4px;width:63px;height:18px;padding-top:1px;letter-spacing:0.674px">0.3000</div>
<div class="inp" style="left:913px;top:4px;width:69px;height:18px;padding-top:1px;letter-spacing:0px"></div>
<div class="inp" style="left:994px;top:4px;width:64px;height:18px;padding-top:1px;letter-spacing:0px"></div>
<div class="btn" style="left:1069px;top:3px;width:36px;height:20px;line-height:18px;background:#c8c8fa;border-color:#2a4a8a;letter-spacing:0.273px;padding-top:0">Add</div>
<svg class="a" style="left:1113px;top:3px" width="19" height="19" viewBox="0 0 19 19"><path d="M6.8 10.8L2 16.6" stroke="#5e5e5e" stroke-width="2.3" stroke-linecap="round"/><circle cx="12.2" cy="6.6" r="5.6" fill="url(#mg)" stroke="#6e6e6e" stroke-width="1.5"/></svg>
<div class="t" style="left:1135px;top:8px;letter-spacing:0.482px;">sent</div>
<div class="t" style="left:1222px;top:6px;color:#1a1a8c"><u><span style="letter-spacing:0.6px">[U</span>]</u></div>
<div class="inp" style="left:1308px;top:4px;width:64px;height:18px;padding-top:1px;letter-spacing:0px"></div>
<div class="inp" style="left:1417px;top:4px;width:136px;height:18px;padding-top:1px;letter-spacing:0px"></div>
</div>
<div class="a" style="left:14px;top:524px;width:1555px;height:17px;overflow:hidden">
<div class="sep" style="left:1px;top:26px;width:1177px"></div>
<div class="sep" style="left:1219px;top:26px;width:161px"></div>
<div class="sep" style="left:1414px;top:26px;width:140px"></div>
<div class="cb" style="left:7px;top:6px"></div>
<svg class="a" style="left:9px;top:9px" width="9" height="8" viewBox="0 0 9 8"><path d="M1 3.5L3.5 6.5L8 1" stroke="#2b8a2b" stroke-width="2.2" fill="none"/></svg>
<div class="t" style="left:34px;top:6px;letter-spacing:2.518px;color:#5a005a;"><u>+</u></div>
<div class="t b" style="left:50px;top:6px;letter-spacing:1.302px;color:#5a005a;">0012</div>
<div class="inp" style="left:96px;top:4px;width:51px;height:18px;padding-top:1px;letter-spacing:0.695px">1.00</div>
<div class="inp" style="left:158px;top:4px;width:45px;height:18px;padding-top:1px;letter-spacing:-0.035px">Each</div>
<div class="inp" style="left:213px;top:4px;width:104px;height:18px;padding-top:1px;letter-spacing:0.684px">5508-12</div>
<div class="inp" style="left:363px;top:6px;width:74px;height:18px;padding-top:1px;letter-spacing:0.412px">EL1/2</div>
<svg class="a" style="left:441px;top:2px" width="19" height="19" viewBox="0 0 19 19"><path d="M6.8 10.8L2 16.6" stroke="#5e5e5e" stroke-width="2.3" stroke-linecap="round"/><circle cx="12.2" cy="6.6" r="5.6" fill="url(#mg)" stroke="#6e6e6e" stroke-width="1.5"/></svg>
<div class="inp" style="left:474px;top:4px;width:136px;height:18px;padding-top:1px;letter-spacing:0.444px">ELA403-WP3043/4In</div>
<div class="inp" style="left:628px;top:4px;width:51px;height:18px;padding-top:1px;letter-spacing:0.438px">A403-W</div>
<div class="inp" style="left:690px;top:4px;width:62px;height:18px;padding-top:1px;letter-spacing:0px"></div>
<div class="inp" style="left:764px;top:4px;width:62px;height:18px;padding-top:1px;letter-spacing:0.674px">5.0000</div>
<div class="inp" style="left:838px;top:4px;width:63px;height:18px;padding-top:1px;letter-spacing:0.674px">0.3000</div>
<div class="inp" style="left:913px;top:4px;width:69px;height:18px;padding-top:1px;letter-spacing:0px"></div>
<div class="inp" style="left:994px;top:4px;width:64px;height:18px;padding-top:1px;letter-spacing:0px"></div>
<div class="btn" style="left:1069px;top:3px;width:36px;height:20px;line-height:18px;background:#c8c8fa;border-color:#2a4a8a;letter-spacing:0.273px;padding-top:0">Add</div>
<svg class="a" style="left:1113px;top:3px" width="19" height="19" viewBox="0 0 19 19"><path d="M6.8 10.8L2 16.6" stroke="#5e5e5e" stroke-width="2.3" stroke-linecap="round"/><circle cx="12.2" cy="6.6" r="5.6" fill="url(#mg)" stroke="#6e6e6e" stroke-width="1.5"/></svg>
<div class="t" style="left:1135px;top:8px;letter-spacing:0.482px;">sent</div>
<div class="t" style="left:1222px;top:6px;color:#1a1a8c"><u><span style="letter-spacing:0.6px">[U</span>]</u></div>
<div class="inp" style="left:1308px;top:4px;width:64px;height:18px;padding-top:1px;letter-spacing:0px"></div>
<div class="inp" style="left:1417px;top:4px;width:136px;height:18px;padding-top:1px;letter-spacing:0px"></div>
</div>
<div class="sep" style="left:15px;top:545px;width:1177px"></div>
<div class="sep" style="left:1233px;top:545px;width:161px"></div>
<div class="sep" style="left:1428px;top:545px;width:140px"></div>
<div class="a" style="left:14px;top:546px;width:1555px;height:27px;overflow:hidden">
<div class="sep" style="left:1px;top:26px;width:1112px"></div>
<div class="sep" style="left:1219px;top:26px;width:161px"></div>
<div class="sep" style="left:1414px;top:26px;width:140px"></div>
<div class="cb" style="left:7px;top:6px"></div>
<svg class="a" style="left:9px;top:9px" width="9" height="8" viewBox="0 0 9 8"><path d="M1 3.5L3.5 6.5L8 1" stroke="#2b8a2b" stroke-width="2.2" fill="none"/></svg>
<div class="t" style="left:50px;top:6px;letter-spacing:0.631px;">0013</div>
<div class="inp" style="left:96px;top:4px;width:51px;height:18px;padding-top:1px;letter-spacing:0.695px">1.00</div>
<div class="inp" style="left:158px;top:4px;width:45px;height:18px;padding-top:1px;letter-spacing:-0.035px">Each</div>
<div class="inp" style="left:213px;top:4px;width:104px;height:18px;padding-top:1px;letter-spacing:0.684px">5508-13</div>
<div class="inp" style="left:363px;top:6px;width:74px;height:18px;padding-top:1px;letter-spacing:0.412px">EL1/2</div>
<svg class="a" style="left:441px;top:2px" width="19" height="19" viewBox="0 0 19 19"><path d="M6.8 10.8L2 16.6" stroke="#5e5e5e" stroke-width="2.3" stroke-linecap="round"/><circle cx="12.2" cy="6.6" r="5.6" fill="url(#mg)" stroke="#6e6e6e" stroke-width="1.5"/></svg>
<div class="inp" style="left:474px;top:4px;width:136px;height:18px;padding-top:1px;letter-spacing:0.444px">ELA403-WP3043/4In</div>
<div class="inp" style="left:628px;top:4px;width:51px;height:18px;padding-top:1px;letter-spacing:0.438px">A403-W</div>
<div class="inp" style="left:690px;top:4px;width:62px;height:18px;padding-top:1px;letter-spacing:0px"></div>
<div class="inp" style="left:764px;top:4px;width:62px;height:18px;padding-top:1px;letter-spacing:0.674px">4.0000</div>
<div class="inp" style="left:838px;top:4px;width:63px;height:18px;padding-top:1px;letter-spacing:0.674px">0.3000</div>
<div class="inp" style="left:913px;top:4px;width:69px;height:18px;padding-top:1px;letter-spacing:0px"></div>
<div class="inp" style="left:994px;top:4px;width:64px;height:18px;padding-top:1px;letter-spacing:0px"></div>
<div class="btn" style="left:1069px;top:3px;width:36px;height:20px;line-height:18px;background:#c8c8fa;border-color:#2a4a8a;letter-spacing:0.273px;padding-top:0">Add</div>
<div class="t" style="left:1222px;top:6px;letter-spacing:0.631px;">0048</div>
<div class="inp" style="left:1308px;top:4px;width:64px;height:18px;padding-top:1px;letter-spacing:0px"></div>
<div class="inp" style="left:1417px;top:4px;width:136px;height:18px;padding-top:1px;letter-spacing:0px"></div>
</div>
<div class="a" style="left:14px;top:573px;width:1555px;height:28px;overflow:hidden">
<div class="sep" style="left:1px;top:27px;width:1112px"></div>
<div class="sep" style="left:1219px;top:27px;width:161px"></div>
<div class="sep" style="left:1414px;top:27px;width:140px"></div>
<div class="cb" style="left:7px;top:6px"></div>
<svg class="a" style="left:9px;top:9px" width="9" height="8" viewBox="0 0 9 8"><path d="M1 3.5L3.5 6.5L8 1" stroke="#2b8a2b" stroke-width="2.2" fill="none"/></svg>
<div class="t" style="left:50px;top:6px;letter-spacing:0.631px;">0014</div>
<div class="inp" style="left:96px;top:4px;width:51px;height:18px;padding-top:1px;letter-spacing:0.695px">1.00</div>
<div class="inp" style="left:158px;top:4px;width:45px;height:18px;padding-top:1px;letter-spacing:-0.035px">Each</div>
<div class="inp" style="left:213px;top:4px;width:104px;height:18px;padding-top:1px;letter-spacing:0.684px">5508-14</div>
<div class="inp" style="left:363px;top:6px;width:74px;height:18px;padding-top:1px;letter-spacing:0.412px">EL1/2</div>
<svg class="a" style="left:441px;top:2px" width="19" height="19" viewBox="0 0 19 19"><path d="M6.8 10.8L2 16.6" stroke="#5e5e5e" stroke-width="2.3" stroke-linecap="round"/><circle cx="12.2" cy="6.6" r="5.6" fill="url(#mg)" stroke="#6e6e6e" stroke-width="1.5"/></svg>
<div class="inp" style="left:474px;top:4px;width:136px;height:18px;padding-top:1px;letter-spacing:0.444px">ELA403-WP3043/4In</div>
<div class="inp" style="left:628px;top:4px;width:51px;height:18px;padding-top:1px;letter-spacing:0.438px">A403-W</div>
<div class="inp" style="left:690px;top:4px;width:62px;height:18px;padding-top:1px;letter-spacing:0px"></div>
<div class="inp" style="left:764px;top:4px;width:62px;height:18px;padding-top:1px;letter-spacing:0.674px">4.0000</div>
<div class="inp" style="left:838px;top:4px;width:63px;height:18px;padding-top:1px;letter-spacing:0.674px">0.3000</div>
<div class="inp" style="left:913px;top:4px;width:69px;height:18px;padding-top:1px;letter-spacing:0px"></div>
<div class="inp" style="left:994px;top:4px;width:64px;height:18px;padding-top:1px;letter-spacing:0px"></div>
<div class="btn" style="left:1069px;top:3px;width:36px;height:20px;line-height:18px;background:#c8c8fa;border-color:#2a4a8a;letter-spacing:0.273px;padding-top:0">Add</div>
<div class="t" style="left:1222px;top:6px;letter-spacing:0.631px;">0048</div>
<div class="inp" style="left:1308px;top:4px;width:64px;height:18px;padding-top:1px;letter-spacing:0px"></div>
<div class="inp" style="left:1417px;top:4px;width:136px;height:18px;padding-top:1px;letter-spacing:0px"></div>
</div>
<div class="a" style="left:14px;top:601px;width:1555px;height:27px;overflow:hidden">
<div class="sep" style="left:1px;top:26px;width:1112px"></div>
<div class="sep" style="left:1219px;top:26px;width:161px"></div>
<div class="sep" style="left:1414px;top:26px;width:140px"></div>
<div class="cb" style="left:7px;top:6px"></div>
<svg class="a" style="left:9px;top:9px" width="9" height="8" viewBox="0 0 9 8"><path d="M1 3.5L3.5 6.5L8 1" stroke="#2b8a2b" stroke-width="2.2" fill="none"/></svg>
<div class="t" style="left:50px;top:6px;letter-spacing:0.631px;">0015</div>
<div class="inp" style="left:96px;top:4px;width:51px;height:18px;padding-top:1px;letter-spacing:0.695px">1.00</div>
<div class="inp" style="left:158px;top:4px;width:45px;height:18px;padding-top:1px;letter-spacing:-0.035px">Each</div>
<div class="inp" style="left:213px;top:4px;width:104px;height:18px;padding-top:1px;letter-spacing:0.684px">5508-15</div>
<div class="inp" style="left:363px;top:6px;width:74px;height:18px;padding-top:1px;letter-spacing:0.412px">EL1/2</div>
<svg class="a" style="left:441px;top:2px" width="19" height="19" viewBox="0 0 19 19"><path d="M6.8 10.8L2 16.6" stroke="#5e5e5e" stroke-width="2.3" stroke-linecap="round"/><circle cx="12.2" cy="6.6" r="5.6" fill="url(#mg)" stroke="#6e6e6e" stroke-width="1.5"/></svg>
<div class="inp" style="left:474px;top:4px;width:136px;height:18px;padding-top:1px;letter-spacing:0.444px">ELA403-WP3043/4In</div>
<div class="inp" style="left:628px;top:4px;width:51px;height:18px;padding-top:1px;letter-spacing:0.438px">A403-W</div>
<div class="inp" style="left:690px;top:4px;width:62px;height:18px;padding-top:1px;letter-spacing:0px"></div>
<div class="inp" style="left:764px;top:4px;width:62px;height:18px;padding-top:1px;letter-spacing:0.674px">4.0000</div>
<div class="inp" style="left:838px;top:4px;width:63px;height:18px;padding-top:1px;letter-spacing:0.674px">0.3000</div>
<div class="inp" style="left:913px;top:4px;width:69px;height:18px;padding-top:1px;letter-spacing:0px"></div>
<div class="inp" style="left:994px;top:4px;width:64px;height:18px;padding-top:1px;letter-spacing:0px"></div>
<div class="btn" style="left:1069px;top:3px;width:36px;height:20px;line-height:18px;background:#c8c8fa;border-color:#2a4a8a;letter-spacing:0.273px;padding-top:0">Add</div>
<div class="t" style="left:1222px;top:6px;letter-spacing:0.631px;">0048</div>
<div class="inp" style="left:1308px;top:4px;width:64px;height:18px;padding-top:1px;letter-spacing:0px"></div>
<div class="inp" style="left:1417px;top:4px;width:136px;height:18px;padding-top:1px;letter-spacing:0px"></div>
</div>
<div class="a" style="left:14px;top:628px;width:1555px;height:28px;overflow:hidden">
<div class="sep" style="left:1px;top:27px;width:1177px"></div>
<div class="sep" style="left:1219px;top:27px;width:161px"></div>
<div class="sep" style="left:1414px;top:27px;width:140px"></div>
<div class="cb" style="left:7px;top:6px"></div>
<svg class="a" style="left:9px;top:9px" width="9" height="8" viewBox="0 0 9 8"><path d="M1 3.5L3.5 6.5L8 1" stroke="#2b8a2b" stroke-width="2.2" fill="none"/></svg>
<div class="t" style="left:50px;top:6px;letter-spacing:0.631px;">0016</div>
<div class="inp" style="left:96px;top:4px;width:51px;height:18px;padding-top:1px;letter-spacing:0.695px">1.00</div>
<div class="inp" style="left:158px;top:4px;width:45px;height:18px;padding-top:1px;letter-spacing:-0.035px">Each</div>
<div class="inp" style="left:213px;top:4px;width:104px;height:18px;padding-top:1px;letter-spacing:0.684px">5508-16</div>
<div class="inp" style="left:363px;top:6px;width:74px;height:18px;padding-top:1px;letter-spacing:0.412px">EL1/2</div>
<svg class="a" style="left:441px;top:2px" width="19" height="19" viewBox="0 0 19 19"><path d="M6.8 10.8L2 16.6" stroke="#5e5e5e" stroke-width="2.3" stroke-linecap="round"/><circle cx="12.2" cy="6.6" r="5.6" fill="url(#mg)" stroke="#6e6e6e" stroke-width="1.5"/></svg>
<div class="inp" style="left:474px;top:4px;width:136px;height:18px;padding-top:1px;letter-spacing:0.444px">ELA403-WP3043/4In</div>
<div class="inp" style="left:628px;top:4px;width:51px;height:18px;padding-top:1px;letter-spacing:0.438px">A403-W</div>
<div class="inp" style="left:690px;top:4px;width:62px;height:18px;padding-top:1px;letter-spacing:0px"></div>
<div class="inp" style="left:764px;top:4px;width:62px;height:18px;padding-top:1px;letter-spacing:0.674px">4.0000</div>
<div class="inp" style="left:838px;top:4px;width:63px;height:18px;padding-top:1px;letter-spacing:0.674px">0.3000</div>
<div class="inp" style="left:913px;top:4px;width:69px;height:18px;padding-top:1px;letter-spacing:0px"></div>
<div class="inp" style="left:994px;top:4px;width:64px;height:18px;padding-top:1px;letter-spacing:0px"></div>
<div class="btn" style="left:1069px;top:3px;width:36px;height:20px;line-height:18px;background:#c8c8fa;border-color:#2a4a8a;letter-spacing:0.273px;padding-top:0">Add</div>
<svg class="a" style="left:1113px;top:3px" width="19" height="19" viewBox="0 0 19 19"><path d="M6.8 10.8L2 16.6" stroke="#5e5e5e" stroke-width="2.3" stroke-linecap="round"/><circle cx="12.2" cy="6.6" r="5.6" fill="url(#mg)" stroke="#6e6e6e" stroke-width="1.5"/></svg>
<div class="t" style="left:1135px;top:8px;letter-spacing:0.482px;">sent</div>
<div class="t" style="left:1222px;top:6px;color:#1a1a8c"><u><span style="letter-spacing:0.6px">[U</span>]</u></div>
<div class="inp" style="left:1308px;top:4px;width:64px;height:18px;padding-top:1px;letter-spacing:0px"></div>
<div class="inp" style="left:1417px;top:4px;width:136px;height:18px;padding-top:1px;letter-spacing:0px"></div>
</div>
<div class="a" style="left:14px;top:656px;width:1555px;height:27px;overflow:hidden">
<div class="sep" style="left:1px;top:26px;width:1177px"></div>
<div class="sep" style="left:1219px;top:26px;width:161px"></div>
<div class="sep" style="left:1414px;top:26px;width:140px"></div>
<div class="cb" style="left:7px;top:6px"></div>
<svg class="a" style="left:9px;top:9px" width="9" height="8" viewBox="0 0 9 8"><path d="M1 3.5L3.5 6.5L8 1" stroke="#2b8a2b" stroke-width="2.2" fill="none"/></svg>
<div class="t" style="left:50px;top:6px;letter-spacing:0.631px;">0017</div>
<div class="inp" style="left:96px;top:4px;width:51px;height:18px;padding-top:1px;letter-spacing:0.695px">1.00</div>
<div class="inp" style="left:158px;top:4px;width:45px;height:18px;padding-top:1px;letter-spacing:-0.035px">Each</div>
<div class="inp" style="left:213px;top:4px;width:104px;height:18px;padding-top:1px;letter-spacing:0.684px">5508-17</div>
<div class="inp" style="left:363px;top:6px;width:74px;height:18px;padding-top:1px;letter-spacing:0.412px">EL1/2</div>
<svg class="a" style="left:441px;top:2px" width="19" height="19" viewBox="0 0 19 19"><path d="M6.8 10.8L2 16.6" stroke="#5e5e5e" stroke-width="2.3" stroke-linecap="round"/><circle cx="12.2" cy="6.6" r="5.6" fill="url(#mg)" stroke="#6e6e6e" stroke-width="1.5"/></svg>
<div class="inp" style="left:474px;top:4px;width:136px;height:18px;padding-top:1px;letter-spacing:0.444px">ELA403-WP3043/4In</div>
<div class="inp" style="left:628px;top:4px;width:51px;height:18px;padding-top:1px;letter-spacing:0.438px">A403-W</div>
<div class="inp" style="left:690px;top:4px;width:62px;height:18px;padding-top:1px;letter-spacing:0px"></div>
<div class="inp" style="left:764px;top:4px;width:62px;height:18px;padding-top:1px;letter-spacing:0.674px">4.0000</div>
<div class="inp" style="left:838px;top:4px;width:63px;height:18px;padding-top:1px;letter-spacing:0.674px">0.3000</div>
<div class="inp" style="left:913px;top:4px;width:69px;height:18px;padding-top:1px;letter-spacing:0px"></div>
<div class="inp" style="left:994px;top:4px;width:64px;height:18px;padding-top:1px;letter-spacing:0px"></div>
<div class="btn" style="left:1069px;top:3px;width:36px;height:20px;line-height:18px;background:#c8c8fa;border-color:#2a4a8a;letter-spacing:0.273px;padding-top:0">Add</div>
<svg class="a" style="left:1113px;top:3px" width="19" height="19" viewBox="0 0 19 19"><path d="M6.8 10.8L2 16.6" stroke="#5e5e5e" stroke-width="2.3" stroke-linecap="round"/><circle cx="12.2" cy="6.6" r="5.6" fill="url(#mg)" stroke="#6e6e6e" stroke-width="1.5"/></svg>
<div class="t" style="left:1135px;top:8px;letter-spacing:0.482px;">sent</div>
<div class="t" style="left:1222px;top:6px;color:#1a1a8c"><u><span style="letter-spacing:0.6px">[U</span>]</u></div>
<div class="inp" style="left:1308px;top:4px;width:64px;height:18px;padding-top:1px;letter-spacing:0px"></div>
<div class="inp" style="left:1417px;top:4px;width:136px;height:18px;padding-top:1px;letter-spacing:0px"></div>
</div>
<div class="a" style="left:14px;top:683px;width:1555px;height:27px;overflow:hidden">
<div class="sep" style="left:1px;top:26px;width:1177px"></div>
<div class="sep" style="left:1219px;top:26px;width:161px"></div>
<div class="sep" style="left:1414px;top:26px;width:140px"></div>
<div class="cb" style="left:7px;top:6px"></div>
<svg class="a" style="left:9px;top:9px" width="9" height="8" viewBox="0 0 9 8"><path d="M1 3.5L3.5 6.5L8 1" stroke="#2b8a2b" stroke-width="2.2" fill="none"/></svg>
<div class="t" style="left:50px;top:6px;letter-spacing:0.631px;">0018</div>
<div class="inp" style="left:96px;top:4px;width:51px;height:18px;padding-top:1px;letter-spacing:0.695px">1.00</div>
<div class="inp" style="left:158px;top:4px;width:45px;height:18px;padding-top:1px;letter-spacing:-0.035px">Each</div>
<div class="inp" style="left:213px;top:4px;width:104px;height:18px;padding-top:1px;letter-spacing:0.684px">5508-18</div>
<div class="inp" style="left:363px;top:6px;width:74px;height:18px;padding-top:1px;letter-spacing:0.412px">EL1/2</div>
<svg class="a" style="left:441px;top:2px" width="19" height="19" viewBox="0 0 19 19"><path d="M6.8 10.8L2 16.6" stroke="#5e5e5e" stroke-width="2.3" stroke-linecap="round"/><circle cx="12.2" cy="6.6" r="5.6" fill="url(#mg)" stroke="#6e6e6e" stroke-width="1.5"/></svg>
<div class="inp" style="left:474px;top:4px;width:136px;height:18px;padding-top:1px;letter-spacing:0.444px">ELA403-WP3043/4In</div>
<div class="inp" style="left:628px;top:4px;width:51px;height:18px;padding-top:1px;letter-spacing:0.438px">A403-W</div>
<div class="inp" style="left:690px;top:4px;width:62px;height:18px;padding-top:1px;letter-spacing:0px"></div>
<div class="inp" style="left:764px;top:4px;width:62px;height:18px;padding-top:1px;letter-spacing:0.674px">4.0000</div>
<div class="inp" style="left:838px;top:4px;width:63px;height:18px;padding-top:1px;letter-spacing:0.674px">0.3000</div>
<div class="inp" style="left:913px;top:4px;width:69px;height:18px;padding-top:1px;letter-spacing:0px"></div>
<div class="inp" style="left:994px;top:4px;width:64px;height:18px;padding-top:1px;letter-spacing:0px"></div>
<div class="btn" style="left:1069px;top:3px;width:36px;height:20px;line-height:18px;background:#c8c8fa;border-color:#2a4a8a;letter-spacing:0.273px;padding-top:0">Add</div>
<svg class="a" style="left:1113px;top:3px" width="19" height="19" viewBox="0 0 19 19"><path d="M6.8 10.8L2 16.6" stroke="#5e5e5e" stroke-width="2.3" stroke-linecap="round"/><circle cx="12.2" cy="6.6" r="5.6" fill="url(#mg)" stroke="#6e6e6e" stroke-width="1.5"/></svg>
<div class="t" style="left:1135px;top:8px;letter-spacing:0.482px;">sent</div>
<div class="t" style="left:1222px;top:6px;color:#1a1a8c"><u><span style="letter-spacing:0.6px">[U</span>]</u></div>
<div class="inp" style="left:1308px;top:4px;width:64px;height:18px;padding-top:1px;letter-spacing:0px"></div>
<div class="inp" style="left:1417px;top:4px;width:136px;height:18px;padding-top:1px;letter-spacing:0px"></div>
</div>
<div class="a" style="left:14px;top:710px;width:1555px;height:28px;overflow:hidden">
<div class="sep" style="left:1px;top:27px;width:1177px"></div>
<div class="sep" style="left:1219px;top:27px;width:161px"></div>
<div class="sep" style="left:1414px;top:27px;width:140px"></div>
<div class="cb" style="left:7px;top:6px"></div>
<svg class="a" style="left:9px;top:9px" width="9" height="8" viewBox="0 0 9 8"><path d="M1 3.5L3.5 6.5L8 1" stroke="#2b8a2b" stroke-width="2.2" fill="none"/></svg>
<div class="t" style="left:50px;top:6px;letter-spacing:0.631px;">0019</div>
<div class="inp" style="left:96px;top:4px;width:51px;height:18px;padding-top:1px;letter-spacing:0.695px">1.00</div>
<div class="inp" style="left:158px;top:4px;width:45px;height:18px;padding-top:1px;letter-spacing:-0.035px">Each</div>
<div class="inp" style="left:213px;top:4px;width:104px;height:18px;padding-top:1px;letter-spacing:0.684px">5508-19</div>
<div class="inp" style="left:363px;top:6px;width:74px;height:18px;padding-top:1px;letter-spacing:0.412px">EL1/2</div>
<svg class="a" style="left:441px;top:2px" width="19" height="19" viewBox="0 0 19 19"><path d="M6.8 10.8L2 16.6" stroke="#5e5e5e" stroke-width="2.3" stroke-linecap="round"/><circle cx="12.2" cy="6.6" r="5.6" fill="url(#mg)" stroke="#6e6e6e" stroke-width="1.5"/></svg>
<div class="inp" style="left:474px;top:4px;width:136px;height:18px;padding-top:1px;letter-spacing:0.444px">ELA403-WP3043/4In</div>
<div class="inp" style="left:628px;top:4px;width:51px;height:18px;padding-top:1px;letter-spacing:0.438px">A403-W</div>
<div class="inp" style="left:690px;top:4px;width:62px;height:18px;padding-top:1px;letter-spacing:0px"></div>
<div class="inp" style="left:764px;top:4px;width:62px;height:18px;padding-top:1px;letter-spacing:0.674px">4.0000</div>
<div class="inp" style="left:838px;top:4px;width:63px;height:18px;padding-top:1px;letter-spacing:0.674px">0.3000</div>
<div class="inp" style="left:913px;top:4px;width:69px;height:18px;padding-top:1px;letter-spacing:0px"></div>
<div class="inp" style="left:994px;top:4px;width:64px;height:18px;padding-top:1px;letter-spacing:0px"></div>
<div class="btn" style="left:1069px;top:3px;width:36px;height:20px;line-height:18px;background:#c8c8fa;border-color:#2a4a8a;letter-spacing:0.273px;padding-top:0">Add</div>
<svg class="a" style="left:1113px;top:3px" width="19" height="19" viewBox="0 0 19 19"><path d="M6.8 10.8L2 16.6" stroke="#5e5e5e" stroke-width="2.3" stroke-linecap="round"/><circle cx="12.2" cy="6.6" r="5.6" fill="url(#mg)" stroke="#6e6e6e" stroke-width="1.5"/></svg>
<div class="t" style="left:1135px;top:8px;letter-spacing:0.482px;">sent</div>
<div class="t" style="left:1222px;top:6px;color:#1a1a8c"><u><span style="letter-spacing:0.6px">[U</span>]</u></div>
<div class="inp" style="left:1308px;top:4px;width:64px;height:18px;padding-top:1px;letter-spacing:0px"></div>
<div class="inp" style="left:1417px;top:4px;width:136px;height:18px;padding-top:1px;letter-spacing:0px"></div>
</div>
<div class="a" style="left:14px;top:738px;width:1555px;height:27px;overflow:hidden">
<div class="sep" style="left:1px;top:26px;width:1177px"></div>
<div class="sep" style="left:1219px;top:26px;width:161px"></div>
<div class="sep" style="left:1414px;top:26px;width:140px"></div>
<div class="cb" style="left:7px;top:6px"></div>
<svg class="a" style="left:9px;top:9px" width="9" height="8" viewBox="0 0 9 8"><path d="M1 3.5L3.5 6.5L8 1" stroke="#2b8a2b" stroke-width="2.2" fill="none"/></svg>
<div class="t" style="left:50px;top:6px;letter-spacing:0.631px;">0020</div>
<div class="inp" style="left:96px;top:4px;width:51px;height:18px;padding-top:1px;letter-spacing:0.695px">1.00</div>
<div class="inp" style="left:158px;top:4px;width:45px;height:18px;padding-top:1px;letter-spacing:-0.035px">Each</div>
<div class="inp" style="left:213px;top:4px;width:104px;height:18px;padding-top:1px;letter-spacing:0.684px">5508-20</div>
<div class="inp" style="left:363px;top:6px;width:74px;height:18px;padding-top:1px;letter-spacing:0.412px">EL1/2</div>
<svg class="a" style="left:441px;top:2px" width="19" height="19" viewBox="0 0 19 19"><path d="M6.8 10.8L2 16.6" stroke="#5e5e5e" stroke-width="2.3" stroke-linecap="round"/><circle cx="12.2" cy="6.6" r="5.6" fill="url(#mg)" stroke="#6e6e6e" stroke-width="1.5"/></svg>
<div class="inp" style="left:474px;top:4px;width:136px;height:18px;padding-top:1px;letter-spacing:0.444px">ELA403-WP3043/4In</div>
<div class="inp" style="left:628px;top:4px;width:51px;height:18px;padding-top:1px;letter-spacing:0.438px">A403-W</div>
<div class="inp" style="left:690px;top:4px;width:62px;height:18px;padding-top:1px;letter-spacing:0px"></div>
<div class="inp" style="left:764px;top:4px;width:62px;height:18px;padding-top:1px;letter-spacing:0.674px">4.0000</div>
<div class="inp" style="left:838px;top:4px;width:63px;height:18px;padding-top:1px;letter-spacing:0.674px">0.3000</div>
<div class="inp" style="left:913px;top:4px;width:69px;height:18px;padding-top:1px;letter-spacing:0px"></div>
<div class="inp" style="left:994px;top:4px;width:64px;height:18px;padding-top:1px;letter-spacing:0px"></div>
<div class="btn" style="left:1069px;top:3px;width:36px;height:20px;line-height:18px;background:#c8c8fa;border-color:#2a4a8a;letter-spacing:0.273px;padding-top:0">Add</div>
<svg class="a" style="left:1113px;top:3px" width="19" height="19" viewBox="0 0 19 19"><path d="M6.8 10.8L2 16.6" stroke="#5e5e5e" stroke-width="2.3" stroke-linecap="round"/><circle cx="12.2" cy="6.6" r="5.6" fill="url(#mg)" stroke="#6e6e6e" stroke-width="1.5"/></svg>
<div class="t" style="left:1135px;top:8px;letter-spacing:0.482px;">sent</div>
<div class="t" style="left:1222px;top:6px;color:#1a1a8c"><u><span style="letter-spacing:0.6px">[U</span>]</u></div>
<div class="inp" style="left:1308px;top:4px;width:64px;height:18px;padding-top:1px;letter-spacing:0px"></div>
<div class="inp" style="left:1417px;top:4px;width:136px;height:18px;padding-top:1px;letter-spacing:0px"></div>
</div>
<div class="a" style="left:14px;top:765px;width:1555px;height:28px;overflow:hidden">
<div class="sep" style="left:1px;top:27px;width:1177px"></div>
<div class="sep" style="left:1219px;top:27px;width:161px"></div>
<div class="sep" style="left:1414px;top:27px;width:140px"></div>
<div class="cb" style="left:7px;top:6px"></div>
<svg class="a" style="left:9px;top:9px" width="9" height="8" viewBox="0 0 9 8"><path d="M1 3.5L3.5 6.5L8 1" stroke="#2b8a2b" stroke-width="2.2" fill="none"/></svg>
<div class="t" style="left:50px;top:6px;letter-spacing:0.631px;">0021</div>
<div class="inp" style="left:96px;top:4px;width:51px;height:18px;padding-top:1px;letter-spacing:0.695px">1.00</div>
<div class="inp" style="left:158px;top:4px;width:45px;height:18px;padding-top:1px;letter-spacing:-0.035px">Each</div>
<div class="inp" style="left:213px;top:4px;width:104px;height:18px;padding-top:1px;letter-spacing:0.684px">5508-21</div>
<div class="inp" style="left:363px;top:6px;width:74px;height:18px;padding-top:1px;letter-spacing:0.412px">EL1/2</div>
<svg class="a" style="left:441px;top:2px" width="19" height="19" viewBox="0 0 19 19"><path d="M6.8 10.8L2 16.6" stroke="#5e5e5e" stroke-width="2.3" stroke-linecap="round"/><circle cx="12.2" cy="6.6" r="5.6" fill="url(#mg)" stroke="#6e6e6e" stroke-width="1.5"/></svg>
<div class="inp" style="left:474px;top:4px;width:136px;height:18px;padding-top:1px;letter-spacing:0.444px">ELA403-WP3043/4In</div>
<div class="inp" style="left:628px;top:4px;width:51px;height:18px;padding-top:1px;letter-spacing:0.438px">A403-W</div>
<div class="inp" style="left:690px;top:4px;width:62px;height:18px;padding-top:1px;letter-spacing:0px"></div>
<div class="inp" style="left:764px;top:4px;width:62px;height:18px;padding-top:1px;letter-spacing:0.674px">4.0000</div>
<div class="inp" style="left:838px;top:4px;width:63px;height:18px;padding-top:1px;letter-spacing:0.674px">0.3000</div>
<div class="inp" style="left:913px;top:4px;width:69px;height:18px;padding-top:1px;letter-spacing:0px"></div>
<div class="inp" style="left:994px;top:4px;width:64px;height:18px;padding-top:1px;letter-spacing:0px"></div>
<div class="btn" style="left:1069px;top:3px;width:36px;height:20px;line-height:18px;background:#c8c8fa;border-color:#2a4a8a;letter-spacing:0.273px;padding-top:0">Add</div>
<svg class="a" style="left:1113px;top:3px" width="19" height="19" viewBox="0 0 19 19"><path d="M6.8 10.8L2 16.6" stroke="#5e5e5e" stroke-width="2.3" stroke-linecap="round"/><circle cx="12.2" cy="6.6" r="5.6" fill="url(#mg)" stroke="#6e6e6e" stroke-width="1.5"/></svg>
<div class="t" style="left:1135px;top:8px;letter-spacing:0.482px;">sent</div>
<div class="t" style="left:1222px;top:6px;color:#1a1a8c"><u><span style="letter-spacing:0.6px">[U</span>]</u></div>
<div class="inp" style="left:1308px;top:4px;width:64px;height:18px;padding-top:1px;letter-spacing:0px"></div>
<div class="inp" style="left:1417px;top:4px;width:136px;height:18px;padding-top:1px;letter-spacing:0px"></div>
</div>
<div class="a" style="left:14px;top:792px;width:1555px;height:8px;overflow:hidden">
<div class="cb" style="left:7px;top:6px"></div>
<div class="inp" style="left:96px;top:4px;width:51px;height:18px"></div>
<div class="inp" style="left:158px;top:4px;width:45px;height:18px"></div>
<div class="inp" style="left:213px;top:4px;width:104px;height:18px"></div>
<div class="inp" style="left:474px;top:4px;width:136px;height:18px"></div>
<div class="inp" style="left:628px;top:4px;width:51px;height:18px"></div>
<div class="inp" style="left:690px;top:4px;width:62px;height:18px"></div>
<div class="inp" style="left:764px;top:4px;width:62px;height:18px"></div>
<div class="inp" style="left:838px;top:4px;width:63px;height:18px"></div>
<div class="inp" style="left:913px;top:4px;width:69px;height:18px"></div>
<div class="inp" style="left:994px;top:4px;width:64px;height:18px"></div>
<div class="inp" style="left:1308px;top:4px;width:64px;height:18px"></div>
<div class="inp" style="left:1417px;top:4px;width:136px;height:18px"></div>
<div class="inp" style="left:363px;top:6px;width:74px;height:18px"></div>
<svg class="a" style="left:441px;top:2px" width="19" height="19" viewBox="0 0 19 19"><path d="M6.8 10.8L2 16.6" stroke="#5e5e5e" stroke-width="2.3" stroke-linecap="round"/><circle cx="12.2" cy="6.6" r="5.6" fill="url(#mg)" stroke="#6e6e6e" stroke-width="1.5"/></svg>
<div class="btn" style="left:1069px;top:3px;width:36px;height:20px;background:#c8c8fa;border-color:#2a4a8a"></div>
</div>
<div class="btn" style="left:16px;top:824px;width:44px;height:20px;line-height:18px;background:#d6e6fb;border-color:#3b5c94;letter-spacing:0.486px;">Save</div>
<div class="inp" style="left:78px;top:824px;width:30px;height:20px;line-height:18px;border:1px solid #a0a0a0">5</div>
<div class="btn" style="left:108px;top:824px;width:111px;height:20px;line-height:18px;background:#9ff2c0;border-color:#3a9a5a;letter-spacing:0.408px;">Add More Lines</div>
<div class="btn" style="left:267px;top:824px;width:157px;height:20px;line-height:18px;background:#c8c8fa;border-color:#2a4a8a;letter-spacing:0.516px;">Save as New Revision</div>
<div class="a" style="left:477px;top:823px;width:105px;height:22px;border:1px solid #505a68;border-radius:2px;background:linear-gradient(#fdfdfd,#e8ecf0 50%,#d4d8de)"></div>
<svg class="a" style="left:483px;top:826px" width="16" height="16" viewBox="0 0 16 16"><path d="M2 1h7l3 3v10H2z" fill="#fff" stroke="#8a9ab0"/><circle cx="10" cy="11" r="4" fill="#2a6ad0"/></svg>
<div class="a b" style="left:502px;top:827px;font-size:12px;line-height:14px;color:#3e4858;letter-spacing:0.4px">IMPORT CSV</div>
<div class="btn" style="left:16px;top:852px;width:97px;height:20px;line-height:18px;background:#f6faff;border-color:#3b5c94;letter-spacing:0.829px;">Create Items</div>
<div class="btn" style="left:117px;top:852px;width:90px;height:20px;line-height:18px;background:#d6e6fb;border-color:#3b5c94;letter-spacing:0.449px;">Create BOM</div>
<div class="btn" style="left:211px;top:852px;width:90px;height:20px;line-height:18px;background:#d6e6fb;border-color:#3b5c94;letter-spacing:0.403px;">Create BOO</div>
<div class="btn" style="left:306px;top:852px;width:124px;height:20px;line-height:18px;background:#d6e6fb;border-color:#3b5c94;letter-spacing:0.715px;">Create Teardown</div>
<div class="btn" style="left:435px;top:852px;width:81px;height:20px;line-height:18px;background:#d6e6fb;border-color:#3b5c94;letter-spacing:0.428px;">Create Job</div>
<div class="btn" style="left:521px;top:852px;width:137px;height:20px;line-height:18px;background:#d6e6fb;border-color:#3b5c94;letter-spacing:0.659px;">Create Work Order</div>
<div class="t b" style="left:647px;top:827px;letter-spacing:0.539px;">Material Cost</div>
<div class="t" style="left:750px;top:827px;letter-spacing:0.682px;">87.00</div>
<div class="t b" style="left:821px;top:827px;letter-spacing:0.612px;">Material Sell</div>
<div class="t" style="left:923px;top:827px;letter-spacing:0.674px;">224.25</div>
<div class="t b" style="left:1010px;top:827px;letter-spacing:0.862px;">Material Profit%</div>
<div class="a" style="left:1130px;top:826px;width:13px;height:13px;border:1px solid #5a7a9a;background:linear-gradient(135deg,#dce4ec,#fff)"></div>
<div class="inp" style="left:1147px;top:825px;width:65px;height:20px;line-height:18px;padding-top:1px;border:1px solid #a0a0a0">157.76</div>
<div class="t b" style="left:1267px;top:827px;letter-spacing:0.677px;">Profit Total</div>
<div class="t" style="left:1361px;top:827px;letter-spacing:0.674px;">137.25</div>
<div class="t b" style="left:1425px;top:827px;letter-spacing:0.654px;">Markup:</div>
<div class="t" style="left:1503px;top:827px;letter-spacing:0.826px;">157.77%</div>
<div class="t b" style="left:663px;top:855px;letter-spacing:0.327px;">Labor Cost</div>
<div class="t" style="left:738px;top:855px;letter-spacing:0.695px;">0.00</div>
<div class="t b" style="left:775px;top:855px;letter-spacing:0.421px;">Labor Sell</div>
<div class="inp" style="left:847px;top:852px;width:65px;height:20px;line-height:18px;padding-top:1px;border:1px solid #a0a0a0">3125.61</div>
<div class="t b" style="left:916px;top:855px;letter-spacing:0.773px;">Labor Profit%</div>
<div class="inp" style="left:1015px;top:852px;width:65px;height:20px;line-height:18px;padding-top:1px;border:1px solid #a0a0a0">0.00</div>
<div class="t" style="left:13px;top:897px;letter-spacing:0.745px;">Last Updated: Your, Administrator 11/05/2009 18:08:41</div>
<div class="t" style="left:13px;top:911px;letter-spacing:0.522px;">Created By:</div>
<div class="t" style="left:100px;top:911px;letter-spacing:0.823px;">Your, Administrator 11/03/2009 15:59:40</div>
</body></html>
